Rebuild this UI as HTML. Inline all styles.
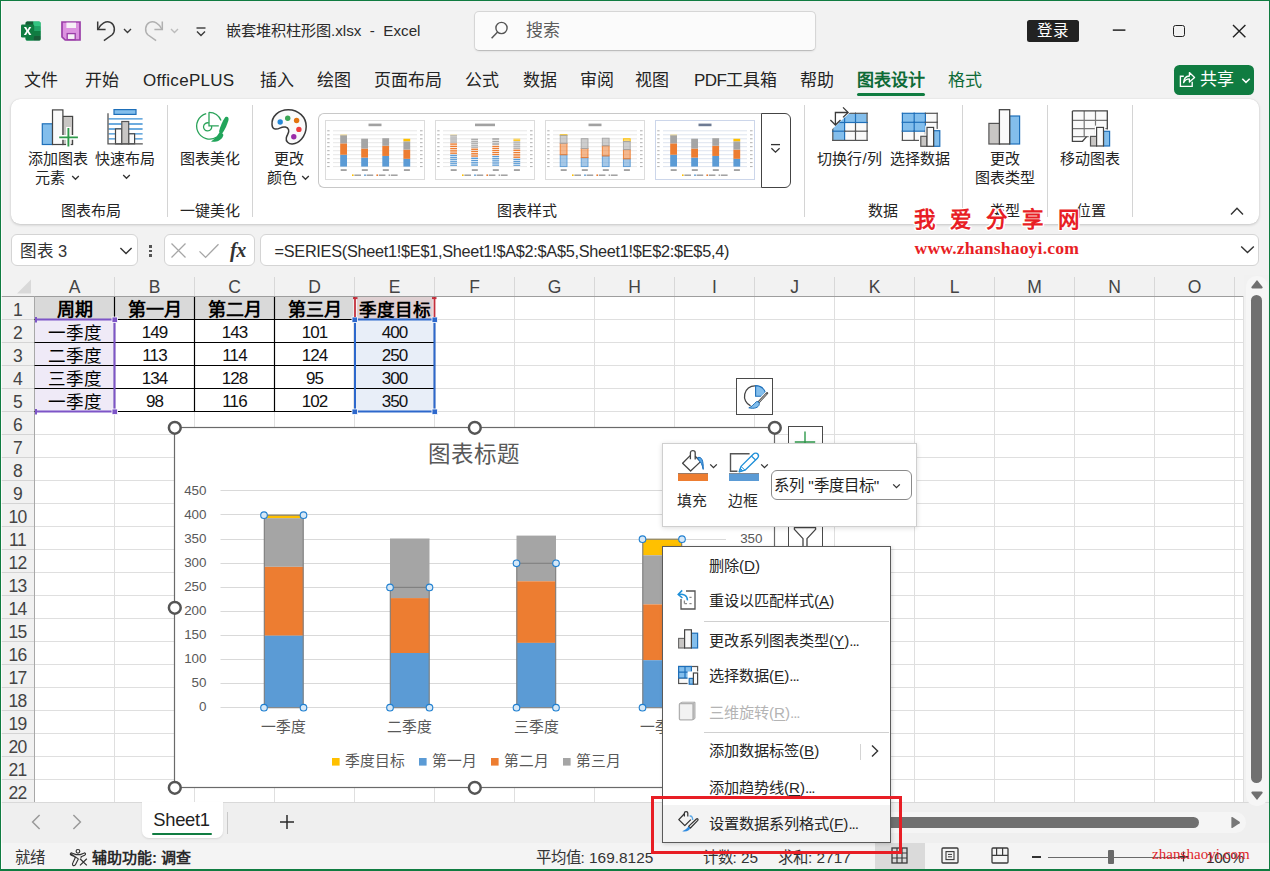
<!DOCTYPE html>
<html lang="zh-CN"><head><meta charset="utf-8"><title>Excel</title>
<style>
html,body{margin:0;padding:0}
body{width:1270px;height:871px;position:relative;overflow:hidden;background:#f2f2f2;font-family:"Liberation Sans",sans-serif;}
.b{position:absolute;box-sizing:border-box;display:block}
.t{position:absolute;white-space:nowrap;margin:0;padding:0}
u{text-decoration:underline;text-underline-offset:2px}
</style></head><body>
<svg class="b" style="left:21px;top:21px;" width="20" height="20" viewBox="0 0 20 20">
<rect x="4.6" y="0.4" width="15" height="19.2" rx="1.6" fill="#21a366"/>
<path d="M4.6 2 A1.6 1.6 0 0 1 6.2 0.4 H12.4 V10 H4.6 Z" fill="#185c37"/>
<path d="M12.4 0.4 H18 A1.6 1.6 0 0 1 19.6 2 V5.3 H12.4 Z" fill="#33c481"/>
<rect x="12.4" y="5.3" width="7.2" height="4.8" fill="#21a366"/>
<rect x="12.4" y="10" width="7.2" height="4.8" fill="#107c41"/>
<path d="M4.6 10 H12.4 V19.6 H6.2 A1.6 1.6 0 0 1 4.6 18 Z" fill="#107c41"/>
<path d="M12.4 14.8 H19.6 V18 A1.6 1.6 0 0 1 18 19.6 H12.4 Z" fill="#185c37"/>
<rect x="0" y="3.4" width="13.2" height="13.2" rx="1.3" fill="#107c41"/>
<path d="M2.9 6 L5.2 6 L6.6 8.7 L8.1 6 L10.3 6 L7.8 10 L10.4 14 L8.1 14 L6.6 11.2 L5.1 14 L2.8 14 L5.4 10 Z" fill="#fff"/>
</svg>
<svg class="b" style="left:61px;top:21px;" width="20" height="20" viewBox="0 0 20 20">
<path d="M1 1 H19 V19 H4.2 L1 15.8 Z" fill="#dc92e0" stroke="#9b3fa8" stroke-width="1.7" stroke-linejoin="miter"/>
<rect x="5.4" y="1.6" width="9.6" height="5.4" fill="#f6f0f6"/>
<rect x="6.2" y="12.6" width="8" height="6" fill="#f6f0f6" stroke="#9b3fa8" stroke-width="1.3"/>
</svg>
<svg class="b" style="left:96px;top:20px;" width="22" height="22" viewBox="0 0 22 22">
<path d="M1.7 1.6 V9.5 H9.6" fill="none" stroke="#3a3a3a" stroke-width="1.5"/>
<path d="M2.3 9 C5 3.6 10 0.4 14.4 2.4 C19 4.8 19.6 11 16.2 14.8 L7.9 20.7" fill="none" stroke="#3a3a3a" stroke-width="1.5"/>
</svg>
<svg class="b" style="left:123px;top:27px;" width="9" height="8" viewBox="0 0 9 8"><path d="M1 2 L4.5 5.5 L8 2" fill="none" stroke="#3a3a3a" stroke-width="1.4"/></svg>
<svg class="b" style="left:141.7px;top:20px;" width="22" height="22" viewBox="0 0 22 22">
<path d="M20.3 1.6 V9.5 H12.4" fill="none" stroke="#b0b0b0" stroke-width="1.5"/>
<path d="M19.7 9 C17 3.6 12 0.4 7.6 2.4 C3 4.8 2.4 11 5.8 14.8 L14.1 20.7" fill="none" stroke="#b0b0b0" stroke-width="1.5"/>
</svg>
<svg class="b" style="left:170px;top:27px;" width="9" height="8" viewBox="0 0 9 8"><path d="M1 2 L4.5 5.5 L8 2" fill="none" stroke="#bcbcbc" stroke-width="1.4"/></svg>
<svg class="b" style="left:195px;top:26px;" width="12" height="12" viewBox="0 0 12 12"><path d="M1.5 2 H10.5" stroke="#3a3a3a" stroke-width="1.4"/><path d="M2 5.5 L6 9.5 L10 5.5" fill="none" stroke="#3a3a3a" stroke-width="1.4"/></svg>
<div class="t " style="left:226px;top:21.0px;font-size:15.2px;line-height:20px;color:#2b2b2b;">嵌套堆积柱形图.xlsx&nbsp; -&nbsp; Excel</div>
<div class="b" style="left:474px;top:11px;width:342px;height:40px;background:#fbfbfb;border:1px solid #d6d6d6;border-bottom-color:#bdbdbd;border-radius:5px;box-shadow:0 1px 2px rgba(0,0,0,.06)"></div>
<svg class="b" style="left:490px;top:20px;" width="20" height="20" viewBox="0 0 20 20"><circle cx="11.5" cy="8" r="5.6" fill="none" stroke="#555" stroke-width="1.4"/><path d="M7.6 12 L1.6 18.2" stroke="#555" stroke-width="1.5"/></svg>
<div class="t " style="left:526px;top:21.0px;font-size:17px;line-height:20px;color:#5c5c5c;">搜索</div>
<div class="b" style="left:1027px;top:19.5px;width:52px;height:22.5px;background:#222;border-radius:2.5px"></div>
<div class="t " style="left:1053px;transform:translateX(-50%);top:21.0px;font-size:15.5px;line-height:20px;color:#fff;font-weight:300;">登录</div>
<svg class="b" style="left:1112px;top:26px;" width="16" height="8" viewBox="0 0 16 8"><path d="M0.8 4.1 H13.4" stroke="#222" stroke-width="1.5"/></svg>
<div class="b" style="left:1172.6px;top:24.6px;width:12.6px;height:12.6px;border:1.4px solid #222;border-radius:2.5px"></div>
<svg class="b" style="left:1231px;top:23px;" width="16" height="16" viewBox="0 0 16 16"><path d="M2 1.9 L14.4 14.3 M14.4 1.9 L2 14.3" stroke="#222" stroke-width="1.4"/></svg>
<div class="t " style="left:23.5px;top:71.3px;font-size:17px;line-height:20px;color:#242424;">文件</div>
<div class="t " style="left:84.5px;top:71.3px;font-size:17px;line-height:20px;color:#242424;">开始</div>
<div class="t " style="left:143px;top:71.3px;font-size:17px;line-height:20px;color:#242424;"><span style="letter-spacing:0.3px">OfficePLUS</span></div>
<div class="t " style="left:259.5px;top:71.3px;font-size:17px;line-height:20px;color:#242424;">插入</div>
<div class="t " style="left:316.5px;top:71.3px;font-size:17px;line-height:20px;color:#242424;">绘图</div>
<div class="t " style="left:374px;top:71.3px;font-size:17px;line-height:20px;color:#242424;">页面布局</div>
<div class="t " style="left:465px;top:71.3px;font-size:17px;line-height:20px;color:#242424;">公式</div>
<div class="t " style="left:522.5px;top:71.3px;font-size:17px;line-height:20px;color:#242424;">数据</div>
<div class="t " style="left:579.5px;top:71.3px;font-size:17px;line-height:20px;color:#242424;">审阅</div>
<div class="t " style="left:635px;top:71.3px;font-size:17px;line-height:20px;color:#242424;">视图</div>
<div class="t " style="left:694px;top:71.3px;font-size:17px;line-height:20px;color:#242424;"><span style="letter-spacing:-0.6px">PDF</span>工具箱</div>
<div class="t " style="left:800px;top:71.3px;font-size:17px;line-height:20px;color:#242424;">帮助</div>
<div class="t " style="left:856.7px;top:71.2px;font-size:17px;line-height:20px;color:#0e6b37;font-weight:700;">图表设计</div>
<div class="b" style="left:857px;top:93px;width:68px;height:3px;background:#107c41;border-radius:1.5px"></div>
<div class="t " style="left:947.5px;top:71.2px;font-size:17px;line-height:20px;color:#0e6b37;">格式</div>
<div class="b" style="left:1174px;top:64.5px;width:80px;height:30.5px;background:#107c41;border-radius:5.5px"></div>
<svg class="b" style="left:1178px;top:69px;" width="20" height="20" viewBox="0 0 20 20"><path d="M5.8 7.2 H2.4 V17.4 H14.2 V12.8" fill="none" stroke="#fff" stroke-width="1.35"/><path d="M5.6 13.6 C5.8 9.4 8.2 7.2 11.4 7 V3.6 L16.6 8.4 L11.4 13 V9.8 C8.8 9.8 7 10.8 5.6 13.6 Z" fill="none" stroke="#fff" stroke-width="1.3" stroke-linejoin="round"/></svg>
<div class="t " style="left:1200px;top:70.3px;font-size:17px;line-height:20px;color:#fff;font-weight:500;">共享</div>
<svg class="b" style="left:1240.5px;top:76.5px;" width="10" height="8" viewBox="0 0 10 8"><path d="M1.3 1.8 L5 5.4 L8.7 1.8" fill="none" stroke="#fff" stroke-width="1.5"/></svg>
<div class="b" style="left:11px;top:99px;width:1248px;height:124.5px;background:#fff;border-radius:9px;box-shadow:0 1px 3px rgba(0,0,0,.18),0 0 1px rgba(0,0,0,.12)"></div>
<div class="b" style="left:167px;top:105px;width:1px;height:112px;background:#d4d4d4"></div>
<div class="b" style="left:252px;top:105px;width:1px;height:112px;background:#d4d4d4"></div>
<div class="b" style="left:804px;top:105px;width:1px;height:112px;background:#d4d4d4"></div>
<div class="b" style="left:962px;top:105px;width:1px;height:112px;background:#d4d4d4"></div>
<div class="b" style="left:1047px;top:105px;width:1px;height:112px;background:#d4d4d4"></div>
<div class="b" style="left:1132px;top:105px;width:1px;height:112px;background:#d4d4d4"></div>
<svg class="b" style="left:38px;top:106px;" width="44" height="44" viewBox="0 0 44 44">
<rect x="4.3" y="17.8" width="10.2" height="20.7" fill="#83beec" stroke="#1e6fb9" stroke-width="1.2"/>
<rect x="24.6" y="10.4" width="10" height="28.1" fill="#c8c6c4" stroke="#444" stroke-width="1.2"/>
<rect x="14.5" y="3.9" width="10.4" height="34.6" fill="#fafafa" stroke="#444" stroke-width="1.2"/>
<path d="M30.4 21 V41.5 M20.5 31.4 H40.6" stroke="#fff" stroke-width="4.6"/>
<path d="M30.4 22 V40.6 M21.2 31.4 H39.9" stroke="#2e9a4b" stroke-width="1.9"/>
</svg>
<div class="t " style="left:58px;transform:translateX(-50%);top:149.0px;font-size:15px;line-height:20px;color:#242424;">添加图表</div>
<div class="t " style="left:50.3px;transform:translateX(-50%);top:168.0px;font-size:15px;line-height:20px;color:#242424;">元素</div>
<svg class="b" style="left:71px;top:174px;" width="9" height="8" viewBox="0 0 9 8"><path d="M1.2 2 L4.5 5.3 L7.8 2" fill="none" stroke="#333" stroke-width="1.3"/></svg>
<svg class="b" style="left:104px;top:106px;" width="44" height="44" viewBox="0 0 44 44">
<rect x="10" y="3.6" width="22" height="4.8" fill="#83beec" stroke="#1e6fb9" stroke-width="1.2"/>
<path d="M4.5 12.9 H38.6" stroke="#3b8fd4" stroke-width="1.3"/><path d="M4.5 18 H38.6" stroke="#3b8fd4" stroke-width="1.3"/><path d="M4.5 23 H38.6" stroke="#3b8fd4" stroke-width="1.3"/><path d="M4.5 27.8 H38.6" stroke="#3b8fd4" stroke-width="1.3"/><path d="M4.5 32.9 H38.6" stroke="#3b8fd4" stroke-width="1.3"/>
<rect x="11.5" y="22.9" width="6.3" height="15" fill="#fafafa" stroke="#444" stroke-width="1.2"/>
<rect x="24.6" y="27.8" width="6" height="10" fill="#fafafa" stroke="#444" stroke-width="1.2"/>
<rect x="17.8" y="15.5" width="6.9" height="22.4" fill="#c8c6c4" stroke="#555" stroke-width="1.2"/>
<path d="M4 7.3 V37.9 H38.8" fill="none" stroke="#555" stroke-width="1.3"/>
</svg>
<div class="t " style="left:125px;transform:translateX(-50%);top:149.0px;font-size:15px;line-height:20px;color:#242424;">快速布局</div>
<svg class="b" style="left:122px;top:173px;" width="9" height="8" viewBox="0 0 9 8"><path d="M1.2 2 L4.5 5.3 L7.8 2" fill="none" stroke="#333" stroke-width="1.3"/></svg>
<div class="t " style="left:91px;transform:translateX(-50%);top:200.5px;font-size:15px;line-height:20px;color:#242424;">图表布局</div>
<svg class="b" style="left:190px;top:106px;" width="44" height="44" viewBox="0 0 44 44">
<path d="M26.8 31 A13 13 0 1 1 16.2 7.6" fill="none" stroke="#2ba35a" stroke-width="1.3"/>
<path d="M19 6.3 V19.8 H28.8" fill="none" stroke="#2ba35a" stroke-width="1.3"/>
<path d="M19 6.4 A13.2 13.2 0 0 1 31 14.5" fill="none" stroke="#2ba35a" stroke-width="1.3"/>
<path d="M19 17 A4.1 4.1 0 1 0 21.6 19.9" fill="none" stroke="#2ba35a" stroke-width="1.3"/>
<path d="M35.2 11.3 C37.6 9.9 39.2 12 38.4 14.6 C37 19 35.2 23.2 32.9 26.6 C31.4 28.6 28.6 27.2 29.2 24.8 C30.4 20.2 32.4 15.2 35.2 11.3 Z" fill="#22a55b"/>
<path d="M29.4 26.6 C31.3 26.4 33.2 27.6 33.4 29 C32.6 32.5 29.6 35 26.4 35.4 C24.5 35.8 22.6 35.9 21 35.5 C24.3 33.6 27 30.6 29.4 26.6 Z" fill="#22a55b"/>
</svg>
<div class="t " style="left:209.5px;transform:translateX(-50%);top:149.0px;font-size:15px;line-height:20px;color:#242424;">图表美化</div>
<div class="t " style="left:209.5px;transform:translateX(-50%);top:200.5px;font-size:15px;line-height:20px;color:#242424;">一键美化</div>
<svg class="b" style="left:270px;top:108px;" width="38" height="38" viewBox="0 0 38 38">
<path d="M2 16.6 C1.4 8.6 8.5 1.6 18.4 1.7 C28.6 1.8 36.3 9 36.2 18.6 C36.1 28.8 28.6 35.6 22.4 36 C18.4 36.2 15.6 33.2 16.3 29.8 C16.9 26.8 19.6 24.8 18.6 21.8 C17.6 18.8 13.6 18.2 10.4 19.8 C7.2 21.4 2.5 22.6 2 16.6 Z" fill="#fafafa" stroke="#3a3a3a" stroke-width="1.5"/>
<circle cx="10.2" cy="14" r="2.7" fill="#2488d8"/><circle cx="17.7" cy="10.2" r="2.7" fill="#3aa655"/>
<circle cx="26.6" cy="12.5" r="2.7" fill="#e3730e"/><circle cx="28.9" cy="21.4" r="2.7" fill="#ee3c40"/>
<circle cx="23.8" cy="28.8" r="2.7" fill="#9a2da8"/>
</svg>
<div class="t " style="left:289px;transform:translateX(-50%);top:149.0px;font-size:15px;line-height:20px;color:#242424;">更改</div>
<div class="t " style="left:281.5px;transform:translateX(-50%);top:168.0px;font-size:15px;line-height:20px;color:#242424;">颜色</div>
<svg class="b" style="left:301px;top:174px;" width="9" height="8" viewBox="0 0 9 8"><path d="M1.2 2 L4.5 5.3 L7.8 2" fill="none" stroke="#333" stroke-width="1.3"/></svg>
<div class="b" style="left:318px;top:113px;width:444px;height:75px;border:1px solid #c8c8c8;border-right:none;border-radius:6px 0 0 6px;background:#fff"></div>
<div class="b" style="left:760.7px;top:113px;width:30.8px;height:75px;border:1.3px solid #444;border-radius:0 6px 6px 0;background:#fff"></div>
<svg class="b" style="left:769px;top:142px;" width="13" height="13" viewBox="0 0 13 13"><path d="M2 2.6 H11" stroke="#333" stroke-width="1.3"/><path d="M2.4 6.2 L6.5 10.2 L10.6 6.2" fill="none" stroke="#333" stroke-width="1.3"/></svg>
<div class="t " style="left:527px;transform:translateX(-50%);top:200.5px;font-size:15px;line-height:20px;color:#242424;">图表样式</div>
<svg class="b" style="left:325px;top:120px;" width="100" height="60" viewBox="0 0 100 60"><rect x="0.5" y="0.5" width="99" height="59" fill="#fff" stroke="#dcdcdc"/><path d="M8 10.8 H92" stroke="#dedede" stroke-width="0.7"/><path d="M2.2 10.8 H4.6 M95 10.8 H97.6" stroke="#9a9a9a" stroke-width="0.8"/><path d="M8 14.8 H92" stroke="#dedede" stroke-width="0.7"/><path d="M2.2 14.8 H4.6 M95 14.8 H97.6" stroke="#9a9a9a" stroke-width="0.8"/><path d="M8 18.8 H92" stroke="#dedede" stroke-width="0.7"/><path d="M2.2 18.8 H4.6 M95 18.8 H97.6" stroke="#9a9a9a" stroke-width="0.8"/><path d="M8 22.7 H92" stroke="#dedede" stroke-width="0.7"/><path d="M2.2 22.7 H4.6 M95 22.7 H97.6" stroke="#9a9a9a" stroke-width="0.8"/><path d="M8 26.7 H92" stroke="#dedede" stroke-width="0.7"/><path d="M2.2 26.7 H4.6 M95 26.7 H97.6" stroke="#9a9a9a" stroke-width="0.8"/><path d="M8 30.7 H92" stroke="#dedede" stroke-width="0.7"/><path d="M2.2 30.7 H4.6 M95 30.7 H97.6" stroke="#9a9a9a" stroke-width="0.8"/><path d="M8 34.7 H92" stroke="#dedede" stroke-width="0.7"/><path d="M2.2 34.7 H4.6 M95 34.7 H97.6" stroke="#9a9a9a" stroke-width="0.8"/><path d="M8 38.7 H92" stroke="#dedede" stroke-width="0.7"/><path d="M2.2 38.7 H4.6 M95 38.7 H97.6" stroke="#9a9a9a" stroke-width="0.8"/><path d="M8 42.6 H92" stroke="#dedede" stroke-width="0.7"/><path d="M2.2 42.6 H4.6 M95 42.6 H97.6" stroke="#9a9a9a" stroke-width="0.8"/><path d="M8 46.6 H92" stroke="#dedede" stroke-width="0.7"/><path d="M2.2 46.6 H4.6 M95 46.6 H97.6" stroke="#9a9a9a" stroke-width="0.8"/><rect x="15.2" y="14.78" width="6.8" height="0.56" fill="#ffc000"/><rect x="15.2" y="34.75" width="6.8" height="11.85" fill="#5b9bd5"/><rect x="15.2" y="23.37" width="6.8" height="11.38" fill="#ed7d31"/><rect x="15.2" y="15.33" width="6.8" height="8.04" fill="#a5a5a5"/><rect x="15.7" y="49.3" width="6" height="1.5" fill="#8c8c8c"/><rect x="36.2" y="37.61" width="6.8" height="8.99" fill="#5b9bd5"/><rect x="36.2" y="28.54" width="6.8" height="9.07" fill="#ed7d31"/><rect x="36.2" y="18.68" width="6.8" height="9.86" fill="#a5a5a5"/><rect x="36.8" y="49.3" width="6" height="1.5" fill="#8c8c8c"/><rect x="57.3" y="35.94" width="6.8" height="10.66" fill="#5b9bd5"/><rect x="57.3" y="25.76" width="6.8" height="10.18" fill="#ed7d31"/><rect x="57.3" y="18.20" width="6.8" height="7.56" fill="#a5a5a5"/><rect x="57.8" y="49.3" width="6" height="1.5" fill="#8c8c8c"/><rect x="78.4" y="18.76" width="6.8" height="2.70" fill="#ffc000"/><rect x="78.4" y="38.80" width="6.8" height="7.80" fill="#5b9bd5"/><rect x="78.4" y="29.58" width="6.8" height="9.23" fill="#ed7d31"/><rect x="78.4" y="21.46" width="6.8" height="8.11" fill="#a5a5a5"/><rect x="78.9" y="49.3" width="6" height="1.5" fill="#8c8c8c"/><rect x="43.5" y="3.6" width="13" height="2.6" fill="#8a8a8a" opacity="0.8"/><rect x="27.0" y="54.4" width="1.6" height="1.6" fill="#ffc000"/><rect x="29.4" y="54.5" width="6.6" height="1.4" fill="#9a9a9a"/><rect x="39.2" y="54.4" width="1.6" height="1.6" fill="#5b9bd5"/><rect x="41.6" y="54.5" width="6.6" height="1.4" fill="#9a9a9a"/><rect x="51.4" y="54.4" width="1.6" height="1.6" fill="#ed7d31"/><rect x="53.8" y="54.5" width="6.6" height="1.4" fill="#9a9a9a"/><rect x="63.599999999999994" y="54.4" width="1.6" height="1.6" fill="#a5a5a5"/><rect x="66.0" y="54.5" width="6.6" height="1.4" fill="#9a9a9a"/></svg>
<svg class="b" style="left:435px;top:120px;" width="100" height="60" viewBox="0 0 100 60"><rect x="0.5" y="0.5" width="99" height="59" fill="#fff" stroke="#dcdcdc"/><path d="M8 10.8 H92" stroke="#dedede" stroke-width="0.7"/><path d="M2.2 10.8 H4.6 M95 10.8 H97.6" stroke="#9a9a9a" stroke-width="0.8"/><path d="M8 14.8 H92" stroke="#dedede" stroke-width="0.7"/><path d="M2.2 14.8 H4.6 M95 14.8 H97.6" stroke="#9a9a9a" stroke-width="0.8"/><path d="M8 18.8 H92" stroke="#dedede" stroke-width="0.7"/><path d="M2.2 18.8 H4.6 M95 18.8 H97.6" stroke="#9a9a9a" stroke-width="0.8"/><path d="M8 22.7 H92" stroke="#dedede" stroke-width="0.7"/><path d="M2.2 22.7 H4.6 M95 22.7 H97.6" stroke="#9a9a9a" stroke-width="0.8"/><path d="M8 26.7 H92" stroke="#dedede" stroke-width="0.7"/><path d="M2.2 26.7 H4.6 M95 26.7 H97.6" stroke="#9a9a9a" stroke-width="0.8"/><path d="M8 30.7 H92" stroke="#dedede" stroke-width="0.7"/><path d="M2.2 30.7 H4.6 M95 30.7 H97.6" stroke="#9a9a9a" stroke-width="0.8"/><path d="M8 34.7 H92" stroke="#dedede" stroke-width="0.7"/><path d="M2.2 34.7 H4.6 M95 34.7 H97.6" stroke="#9a9a9a" stroke-width="0.8"/><path d="M8 38.7 H92" stroke="#dedede" stroke-width="0.7"/><path d="M2.2 38.7 H4.6 M95 38.7 H97.6" stroke="#9a9a9a" stroke-width="0.8"/><path d="M8 42.6 H92" stroke="#dedede" stroke-width="0.7"/><path d="M2.2 42.6 H4.6 M95 42.6 H97.6" stroke="#9a9a9a" stroke-width="0.8"/><path d="M8 46.6 H92" stroke="#dedede" stroke-width="0.7"/><path d="M2.2 46.6 H4.6 M95 46.6 H97.6" stroke="#9a9a9a" stroke-width="0.8"/><rect x="15.2" y="14.78" width="6.8" height="0.17" fill="#ffc000"/><rect x="15.2" y="15.06" width="6.8" height="0.17" fill="#ffc000"/><rect x="15.2" y="34.75" width="6.8" height="1.22" fill="#5b9bd5"/><rect x="15.2" y="36.72" width="6.8" height="1.22" fill="#5b9bd5"/><rect x="15.2" y="38.70" width="6.8" height="1.22" fill="#5b9bd5"/><rect x="15.2" y="40.67" width="6.8" height="1.22" fill="#5b9bd5"/><rect x="15.2" y="42.65" width="6.8" height="1.22" fill="#5b9bd5"/><rect x="15.2" y="44.62" width="6.8" height="1.22" fill="#5b9bd5"/><rect x="15.2" y="23.37" width="6.8" height="1.41" fill="#ed7d31"/><rect x="15.2" y="25.65" width="6.8" height="1.41" fill="#ed7d31"/><rect x="15.2" y="27.92" width="6.8" height="1.41" fill="#ed7d31"/><rect x="15.2" y="30.20" width="6.8" height="1.41" fill="#ed7d31"/><rect x="15.2" y="32.47" width="6.8" height="1.41" fill="#ed7d31"/><rect x="15.2" y="15.33" width="6.8" height="1.25" fill="#a5a5a5"/><rect x="15.2" y="17.34" width="6.8" height="1.25" fill="#a5a5a5"/><rect x="15.2" y="19.35" width="6.8" height="1.25" fill="#a5a5a5"/><rect x="15.2" y="21.36" width="6.8" height="1.25" fill="#a5a5a5"/><rect x="15.7" y="49.3" width="6" height="1.5" fill="#8c8c8c"/><rect x="36.2" y="37.61" width="6.8" height="1.39" fill="#5b9bd5"/><rect x="36.2" y="39.86" width="6.8" height="1.39" fill="#5b9bd5"/><rect x="36.2" y="42.11" width="6.8" height="1.39" fill="#5b9bd5"/><rect x="36.2" y="44.35" width="6.8" height="1.39" fill="#5b9bd5"/><rect x="36.2" y="28.54" width="6.8" height="1.41" fill="#ed7d31"/><rect x="36.2" y="30.81" width="6.8" height="1.41" fill="#ed7d31"/><rect x="36.2" y="33.08" width="6.8" height="1.41" fill="#ed7d31"/><rect x="36.2" y="35.34" width="6.8" height="1.41" fill="#ed7d31"/><rect x="36.2" y="18.68" width="6.8" height="1.22" fill="#a5a5a5"/><rect x="36.2" y="20.65" width="6.8" height="1.22" fill="#a5a5a5"/><rect x="36.2" y="22.62" width="6.8" height="1.22" fill="#a5a5a5"/><rect x="36.2" y="24.59" width="6.8" height="1.22" fill="#a5a5a5"/><rect x="36.2" y="26.57" width="6.8" height="1.22" fill="#a5a5a5"/><rect x="36.8" y="49.3" width="6" height="1.5" fill="#8c8c8c"/><rect x="57.3" y="35.94" width="6.8" height="1.32" fill="#5b9bd5"/><rect x="57.3" y="38.07" width="6.8" height="1.32" fill="#5b9bd5"/><rect x="57.3" y="40.20" width="6.8" height="1.32" fill="#5b9bd5"/><rect x="57.3" y="42.34" width="6.8" height="1.32" fill="#5b9bd5"/><rect x="57.3" y="44.47" width="6.8" height="1.32" fill="#5b9bd5"/><rect x="57.3" y="25.76" width="6.8" height="1.26" fill="#ed7d31"/><rect x="57.3" y="27.79" width="6.8" height="1.26" fill="#ed7d31"/><rect x="57.3" y="29.83" width="6.8" height="1.26" fill="#ed7d31"/><rect x="57.3" y="31.87" width="6.8" height="1.26" fill="#ed7d31"/><rect x="57.3" y="33.90" width="6.8" height="1.26" fill="#ed7d31"/><rect x="57.3" y="18.20" width="6.8" height="1.56" fill="#a5a5a5"/><rect x="57.3" y="20.72" width="6.8" height="1.56" fill="#a5a5a5"/><rect x="57.3" y="23.24" width="6.8" height="1.56" fill="#a5a5a5"/><rect x="57.8" y="49.3" width="6" height="1.5" fill="#8c8c8c"/><rect x="78.4" y="18.76" width="6.8" height="0.84" fill="#ffc000"/><rect x="78.4" y="20.11" width="6.8" height="0.84" fill="#ffc000"/><rect x="78.4" y="38.80" width="6.8" height="1.21" fill="#5b9bd5"/><rect x="78.4" y="40.75" width="6.8" height="1.21" fill="#5b9bd5"/><rect x="78.4" y="42.70" width="6.8" height="1.21" fill="#5b9bd5"/><rect x="78.4" y="44.65" width="6.8" height="1.21" fill="#5b9bd5"/><rect x="78.4" y="29.58" width="6.8" height="1.43" fill="#ed7d31"/><rect x="78.4" y="31.88" width="6.8" height="1.43" fill="#ed7d31"/><rect x="78.4" y="34.19" width="6.8" height="1.43" fill="#ed7d31"/><rect x="78.4" y="36.50" width="6.8" height="1.43" fill="#ed7d31"/><rect x="78.4" y="21.46" width="6.8" height="1.26" fill="#a5a5a5"/><rect x="78.4" y="23.49" width="6.8" height="1.26" fill="#a5a5a5"/><rect x="78.4" y="25.52" width="6.8" height="1.26" fill="#a5a5a5"/><rect x="78.4" y="27.55" width="6.8" height="1.26" fill="#a5a5a5"/><rect x="78.9" y="49.3" width="6" height="1.5" fill="#8c8c8c"/><rect x="40.0" y="3.6" width="20" height="2.6" fill="#8a8a8a" opacity="0.8"/><rect x="27.0" y="54.4" width="1.6" height="1.6" fill="#ffc000"/><rect x="29.4" y="54.5" width="6.6" height="1.4" fill="#9a9a9a"/><rect x="39.2" y="54.4" width="1.6" height="1.6" fill="#5b9bd5"/><rect x="41.6" y="54.5" width="6.6" height="1.4" fill="#9a9a9a"/><rect x="51.4" y="54.4" width="1.6" height="1.6" fill="#ed7d31"/><rect x="53.8" y="54.5" width="6.6" height="1.4" fill="#9a9a9a"/><rect x="63.599999999999994" y="54.4" width="1.6" height="1.6" fill="#a5a5a5"/><rect x="66.0" y="54.5" width="6.6" height="1.4" fill="#9a9a9a"/></svg>
<svg class="b" style="left:545px;top:120px;" width="100" height="60" viewBox="0 0 100 60"><rect x="0.5" y="0.5" width="99" height="59" fill="#fff" stroke="#dcdcdc"/><path d="M8 10.8 H92" stroke="#dedede" stroke-width="0.7"/><path d="M2.2 10.8 H4.6 M95 10.8 H97.6" stroke="#9a9a9a" stroke-width="0.8"/><path d="M8 14.8 H92" stroke="#dedede" stroke-width="0.7"/><path d="M2.2 14.8 H4.6 M95 14.8 H97.6" stroke="#9a9a9a" stroke-width="0.8"/><path d="M8 18.8 H92" stroke="#dedede" stroke-width="0.7"/><path d="M2.2 18.8 H4.6 M95 18.8 H97.6" stroke="#9a9a9a" stroke-width="0.8"/><path d="M8 22.7 H92" stroke="#dedede" stroke-width="0.7"/><path d="M2.2 22.7 H4.6 M95 22.7 H97.6" stroke="#9a9a9a" stroke-width="0.8"/><path d="M8 26.7 H92" stroke="#dedede" stroke-width="0.7"/><path d="M2.2 26.7 H4.6 M95 26.7 H97.6" stroke="#9a9a9a" stroke-width="0.8"/><path d="M8 30.7 H92" stroke="#dedede" stroke-width="0.7"/><path d="M2.2 30.7 H4.6 M95 30.7 H97.6" stroke="#9a9a9a" stroke-width="0.8"/><path d="M8 34.7 H92" stroke="#dedede" stroke-width="0.7"/><path d="M2.2 34.7 H4.6 M95 34.7 H97.6" stroke="#9a9a9a" stroke-width="0.8"/><path d="M8 38.7 H92" stroke="#dedede" stroke-width="0.7"/><path d="M2.2 38.7 H4.6 M95 38.7 H97.6" stroke="#9a9a9a" stroke-width="0.8"/><path d="M8 42.6 H92" stroke="#dedede" stroke-width="0.7"/><path d="M2.2 42.6 H4.6 M95 42.6 H97.6" stroke="#9a9a9a" stroke-width="0.8"/><path d="M8 46.6 H92" stroke="#dedede" stroke-width="0.7"/><path d="M2.2 46.6 H4.6 M95 46.6 H97.6" stroke="#9a9a9a" stroke-width="0.8"/><rect x="15.2" y="14.78" width="6.8" height="0.56" fill="#ffc000" fill-opacity="0.55" stroke="#ffc000" stroke-width="0.9"/><rect x="15.2" y="34.75" width="6.8" height="11.85" fill="#5b9bd5" fill-opacity="0.55" stroke="#5b9bd5" stroke-width="0.9"/><rect x="15.2" y="23.37" width="6.8" height="11.38" fill="#ed7d31" fill-opacity="0.55" stroke="#ed7d31" stroke-width="0.9"/><rect x="15.2" y="15.33" width="6.8" height="8.04" fill="#a5a5a5" fill-opacity="0.55" stroke="#a5a5a5" stroke-width="0.9"/><rect x="15.7" y="49.3" width="6" height="1.5" fill="#8c8c8c"/><rect x="36.2" y="37.61" width="6.8" height="8.99" fill="#5b9bd5" fill-opacity="0.55" stroke="#5b9bd5" stroke-width="0.9"/><rect x="36.2" y="28.54" width="6.8" height="9.07" fill="#ed7d31" fill-opacity="0.55" stroke="#ed7d31" stroke-width="0.9"/><rect x="36.2" y="18.68" width="6.8" height="9.86" fill="#a5a5a5" fill-opacity="0.55" stroke="#a5a5a5" stroke-width="0.9"/><rect x="36.8" y="49.3" width="6" height="1.5" fill="#8c8c8c"/><rect x="57.3" y="35.94" width="6.8" height="10.66" fill="#5b9bd5" fill-opacity="0.55" stroke="#5b9bd5" stroke-width="0.9"/><rect x="57.3" y="25.76" width="6.8" height="10.18" fill="#ed7d31" fill-opacity="0.55" stroke="#ed7d31" stroke-width="0.9"/><rect x="57.3" y="18.20" width="6.8" height="7.56" fill="#a5a5a5" fill-opacity="0.55" stroke="#a5a5a5" stroke-width="0.9"/><rect x="57.8" y="49.3" width="6" height="1.5" fill="#8c8c8c"/><rect x="78.4" y="18.76" width="6.8" height="2.70" fill="#ffc000" fill-opacity="0.55" stroke="#ffc000" stroke-width="0.9"/><rect x="78.4" y="38.80" width="6.8" height="7.80" fill="#5b9bd5" fill-opacity="0.55" stroke="#5b9bd5" stroke-width="0.9"/><rect x="78.4" y="29.58" width="6.8" height="9.23" fill="#ed7d31" fill-opacity="0.55" stroke="#ed7d31" stroke-width="0.9"/><rect x="78.4" y="21.46" width="6.8" height="8.11" fill="#a5a5a5" fill-opacity="0.55" stroke="#a5a5a5" stroke-width="0.9"/><rect x="78.9" y="49.3" width="6" height="1.5" fill="#8c8c8c"/><rect x="43.5" y="3.6" width="13" height="2.6" fill="#8a8a8a" opacity="0.8"/><rect x="27.0" y="54.4" width="1.6" height="1.6" fill="#ffc000"/><rect x="29.4" y="54.5" width="6.6" height="1.4" fill="#9a9a9a"/><rect x="39.2" y="54.4" width="1.6" height="1.6" fill="#5b9bd5"/><rect x="41.6" y="54.5" width="6.6" height="1.4" fill="#9a9a9a"/><rect x="51.4" y="54.4" width="1.6" height="1.6" fill="#ed7d31"/><rect x="53.8" y="54.5" width="6.6" height="1.4" fill="#9a9a9a"/><rect x="63.599999999999994" y="54.4" width="1.6" height="1.6" fill="#a5a5a5"/><rect x="66.0" y="54.5" width="6.6" height="1.4" fill="#9a9a9a"/></svg>
<svg class="b" style="left:655px;top:120px;" width="100" height="60" viewBox="0 0 100 60"><rect x="0.5" y="0.5" width="99" height="59" fill="#fff" stroke="#ccd6ea"/><path d="M8 10.8 H92" stroke="#cfd8e8" stroke-width="0.7"/><path d="M2.2 10.8 H4.6 M95 10.8 H97.6" stroke="#9a9a9a" stroke-width="0.8"/><path d="M8 14.8 H92" stroke="#cfd8e8" stroke-width="0.7"/><path d="M2.2 14.8 H4.6 M95 14.8 H97.6" stroke="#9a9a9a" stroke-width="0.8"/><path d="M8 18.8 H92" stroke="#cfd8e8" stroke-width="0.7"/><path d="M2.2 18.8 H4.6 M95 18.8 H97.6" stroke="#9a9a9a" stroke-width="0.8"/><path d="M8 22.7 H92" stroke="#cfd8e8" stroke-width="0.7"/><path d="M2.2 22.7 H4.6 M95 22.7 H97.6" stroke="#9a9a9a" stroke-width="0.8"/><path d="M8 26.7 H92" stroke="#cfd8e8" stroke-width="0.7"/><path d="M2.2 26.7 H4.6 M95 26.7 H97.6" stroke="#9a9a9a" stroke-width="0.8"/><path d="M8 30.7 H92" stroke="#cfd8e8" stroke-width="0.7"/><path d="M2.2 30.7 H4.6 M95 30.7 H97.6" stroke="#9a9a9a" stroke-width="0.8"/><path d="M8 34.7 H92" stroke="#cfd8e8" stroke-width="0.7"/><path d="M2.2 34.7 H4.6 M95 34.7 H97.6" stroke="#9a9a9a" stroke-width="0.8"/><path d="M8 38.7 H92" stroke="#cfd8e8" stroke-width="0.7"/><path d="M2.2 38.7 H4.6 M95 38.7 H97.6" stroke="#9a9a9a" stroke-width="0.8"/><path d="M8 42.6 H92" stroke="#cfd8e8" stroke-width="0.7"/><path d="M2.2 42.6 H4.6 M95 42.6 H97.6" stroke="#9a9a9a" stroke-width="0.8"/><path d="M8 46.6 H92" stroke="#cfd8e8" stroke-width="0.7"/><path d="M2.2 46.6 H4.6 M95 46.6 H97.6" stroke="#9a9a9a" stroke-width="0.8"/><rect x="15.2" y="14.78" width="6.8" height="0.56" fill="#ffc000"/><rect x="15.2" y="34.75" width="6.8" height="11.85" fill="#5b9bd5"/><rect x="15.2" y="23.37" width="6.8" height="11.38" fill="#ed7d31"/><rect x="15.2" y="15.33" width="6.8" height="8.04" fill="#a5a5a5"/><rect x="15.7" y="49.3" width="6" height="1.5" fill="#8c8c8c"/><rect x="36.2" y="37.61" width="6.8" height="8.99" fill="#5b9bd5"/><rect x="36.2" y="28.54" width="6.8" height="9.07" fill="#ed7d31"/><rect x="36.2" y="18.68" width="6.8" height="9.86" fill="#a5a5a5"/><rect x="36.8" y="49.3" width="6" height="1.5" fill="#8c8c8c"/><rect x="57.3" y="35.94" width="6.8" height="10.66" fill="#5b9bd5"/><rect x="57.3" y="25.76" width="6.8" height="10.18" fill="#ed7d31"/><rect x="57.3" y="18.20" width="6.8" height="7.56" fill="#a5a5a5"/><rect x="57.8" y="49.3" width="6" height="1.5" fill="#8c8c8c"/><rect x="78.4" y="18.76" width="6.8" height="2.70" fill="#ffc000"/><rect x="78.4" y="38.80" width="6.8" height="7.80" fill="#5b9bd5"/><rect x="78.4" y="29.58" width="6.8" height="9.23" fill="#ed7d31"/><rect x="78.4" y="21.46" width="6.8" height="8.11" fill="#a5a5a5"/><rect x="78.9" y="49.3" width="6" height="1.5" fill="#8c8c8c"/><rect x="43.5" y="3.6" width="13" height="2.6" fill="#4a5a78" opacity="0.8"/><rect x="27.0" y="54.4" width="1.6" height="1.6" fill="#ffc000"/><rect x="29.4" y="54.5" width="6.6" height="1.4" fill="#9a9a9a"/><rect x="39.2" y="54.4" width="1.6" height="1.6" fill="#5b9bd5"/><rect x="41.6" y="54.5" width="6.6" height="1.4" fill="#9a9a9a"/><rect x="51.4" y="54.4" width="1.6" height="1.6" fill="#ed7d31"/><rect x="53.8" y="54.5" width="6.6" height="1.4" fill="#9a9a9a"/><rect x="63.599999999999994" y="54.4" width="1.6" height="1.6" fill="#a5a5a5"/><rect x="66.0" y="54.5" width="6.6" height="1.4" fill="#9a9a9a"/></svg>
<svg class="b" style="left:826px;top:104px;" width="46" height="42" viewBox="0 0 46 42"><rect x="6.8" y="9.3" width="11.8" height="9.2" fill="#83beec"/><rect x="18.6" y="9.3" width="10.9" height="9.2" fill="#83beec"/><rect x="29.5" y="9.3" width="11.6" height="9.2" fill="#83beec"/><rect x="6.8" y="18.5" width="11.8" height="8.7" fill="#83beec"/><rect x="18.6" y="18.5" width="10.9" height="8.7" fill="#fafafa"/><rect x="29.5" y="18.5" width="11.6" height="8.7" fill="#fafafa"/><rect x="6.8" y="27.2" width="11.8" height="9.2" fill="#83beec"/><rect x="18.6" y="27.2" width="10.9" height="9.2" fill="#fafafa"/><rect x="29.5" y="27.2" width="11.6" height="9.2" fill="#fafafa"/><path d="M6.8 8.700000000000001 V19.1" stroke="#555" stroke-width="1.2"/><path d="M6.8 17.9 V27.8" stroke="#555" stroke-width="1.2"/><path d="M6.8 26.599999999999998 V37.0" stroke="#555" stroke-width="1.2"/><path d="M18.6 8.700000000000001 V19.1" stroke="#1e6fb9" stroke-width="1.2"/><path d="M18.6 17.9 V27.8" stroke="#1e6fb9" stroke-width="1.2"/><path d="M18.6 26.599999999999998 V37.0" stroke="#1e6fb9" stroke-width="1.2"/><path d="M29.5 8.700000000000001 V19.1" stroke="#1e6fb9" stroke-width="1.2"/><path d="M29.5 17.9 V27.8" stroke="#555" stroke-width="1.2"/><path d="M29.5 26.599999999999998 V37.0" stroke="#555" stroke-width="1.2"/><path d="M41.1 8.700000000000001 V19.1" stroke="#555" stroke-width="1.2"/><path d="M41.1 17.9 V27.8" stroke="#555" stroke-width="1.2"/><path d="M41.1 26.599999999999998 V37.0" stroke="#555" stroke-width="1.2"/><path d="M6.2 9.3 H19.200000000000003" stroke="#555" stroke-width="1.2"/><path d="M18.0 9.3 H30.1" stroke="#555" stroke-width="1.2"/><path d="M28.9 9.3 H41.7" stroke="#555" stroke-width="1.2"/><path d="M6.2 18.5 H19.200000000000003" stroke="#1e6fb9" stroke-width="1.2"/><path d="M18.0 18.5 H30.1" stroke="#1e6fb9" stroke-width="1.2"/><path d="M28.9 18.5 H41.7" stroke="#1e6fb9" stroke-width="1.2"/><path d="M6.2 27.2 H19.200000000000003" stroke="#1e6fb9" stroke-width="1.2"/><path d="M18.0 27.2 H30.1" stroke="#555" stroke-width="1.2"/><path d="M28.9 27.2 H41.7" stroke="#555" stroke-width="1.2"/><path d="M6.2 36.4 H19.200000000000003" stroke="#555" stroke-width="1.2"/><path d="M18.0 36.4 H30.1" stroke="#555" stroke-width="1.2"/><path d="M28.9 36.4 H41.7" stroke="#555" stroke-width="1.2"/>
<path d="M5 8 H24.5 L5 26.2 Z" fill="#fff"/>
<path d="M9.4 20.6 V8.5 H21.6" fill="none" stroke="#3a3a3a" stroke-width="1.3"/>
<path d="M17 3.4 L22.1 8.5 L17 13.4" fill="none" stroke="#3a3a3a" stroke-width="1.3"/>
<path d="M4.4 16 L9.4 21 L14.5 16" fill="none" stroke="#3a3a3a" stroke-width="1.3"/>
</svg>
<div class="t " style="left:849.5px;transform:translateX(-50%);top:149.0px;font-size:15px;line-height:20px;color:#242424;">切换行/列</div>
<svg class="b" style="left:898px;top:108px;" width="46" height="42" viewBox="0 0 46 42"><rect x="4.4" y="5.3" width="11.8" height="9.0" fill="#83beec"/><rect x="16.2" y="5.3" width="11.2" height="9.0" fill="#83beec"/><rect x="27.4" y="5.3" width="11.8" height="9.0" fill="#fafafa"/><rect x="4.4" y="14.3" width="11.8" height="8.9" fill="#83beec"/><rect x="16.2" y="14.3" width="11.2" height="8.9" fill="#83beec"/><rect x="27.4" y="14.3" width="11.8" height="8.9" fill="#fafafa"/><rect x="4.4" y="23.2" width="11.8" height="9.2" fill="#fafafa"/><rect x="16.2" y="23.2" width="11.2" height="9.2" fill="#fafafa"/><rect x="27.4" y="23.2" width="11.8" height="9.2" fill="#fafafa"/><path d="M4.4 4.7 V14.9" stroke="#1e6fb9" stroke-width="1.2"/><path d="M4.4 13.700000000000001 V23.8" stroke="#1e6fb9" stroke-width="1.2"/><path d="M4.4 22.599999999999998 V33.0" stroke="#555" stroke-width="1.2"/><path d="M16.2 4.7 V14.9" stroke="#1e6fb9" stroke-width="1.2"/><path d="M16.2 13.700000000000001 V23.8" stroke="#1e6fb9" stroke-width="1.2"/><path d="M16.2 22.599999999999998 V33.0" stroke="#555" stroke-width="1.2"/><path d="M27.4 4.7 V14.9" stroke="#1e6fb9" stroke-width="1.2"/><path d="M27.4 13.700000000000001 V23.8" stroke="#1e6fb9" stroke-width="1.2"/><path d="M27.4 22.599999999999998 V33.0" stroke="#555" stroke-width="1.2"/><path d="M39.2 4.7 V14.9" stroke="#555" stroke-width="1.2"/><path d="M39.2 13.700000000000001 V23.8" stroke="#555" stroke-width="1.2"/><path d="M39.2 22.599999999999998 V33.0" stroke="#555" stroke-width="1.2"/><path d="M3.8000000000000003 5.3 H16.8" stroke="#1e6fb9" stroke-width="1.2"/><path d="M15.6 5.3 H28.0" stroke="#1e6fb9" stroke-width="1.2"/><path d="M26.799999999999997 5.3 H39.800000000000004" stroke="#555" stroke-width="1.2"/><path d="M3.8000000000000003 14.3 H16.8" stroke="#1e6fb9" stroke-width="1.2"/><path d="M15.6 14.3 H28.0" stroke="#1e6fb9" stroke-width="1.2"/><path d="M26.799999999999997 14.3 H39.800000000000004" stroke="#555" stroke-width="1.2"/><path d="M3.8000000000000003 23.2 H16.8" stroke="#1e6fb9" stroke-width="1.2"/><path d="M15.6 23.2 H28.0" stroke="#1e6fb9" stroke-width="1.2"/><path d="M26.799999999999997 23.2 H39.800000000000004" stroke="#555" stroke-width="1.2"/><path d="M3.8000000000000003 32.4 H16.8" stroke="#555" stroke-width="1.2"/><path d="M15.6 32.4 H28.0" stroke="#555" stroke-width="1.2"/><path d="M26.799999999999997 32.4 H39.800000000000004" stroke="#555" stroke-width="1.2"/><rect x="21.2" y="17.799999999999997" width="22.2" height="20.5" fill="#fff" opacity="0"/><rect x="21.0" y="26.5" width="9.8" height="11.8" fill="#fff"/><rect x="27.2" y="17.6" width="10.2" height="20.7" fill="#fff"/><rect x="33.8" y="20.9" width="9.8" height="17.4" fill="#fff"/><rect x="22.8" y="28.3" width="6.2" height="10.0" fill="#c8c6c4" stroke="#555" stroke-width="1.2"/><rect x="35.6" y="22.7" width="6.2" height="15.6" fill="#83beec" stroke="#1e6fb9" stroke-width="1.2"/><rect x="29.0" y="19.4" width="6.6" height="18.9" fill="#fafafa" stroke="#444" stroke-width="1.2"/></svg>
<div class="t " style="left:920px;transform:translateX(-50%);top:149.0px;font-size:15px;line-height:20px;color:#242424;">选择数据</div>
<div class="t " style="left:883px;transform:translateX(-50%);top:200.5px;font-size:15px;line-height:20px;color:#242424;">数据</div>
<svg class="b" style="left:984px;top:106px;" width="40" height="42" viewBox="0 0 40 42">
<rect x="4.9" y="17.4" width="10.7" height="20.6" fill="#c8c6c4" stroke="#555" stroke-width="1.2"/>
<rect x="25.6" y="10" width="10" height="28" fill="#83beec" stroke="#1e6fb9" stroke-width="1.2"/>
<rect x="15.4" y="3.7" width="10.3" height="34.3" fill="#fafafa" stroke="#444" stroke-width="1.3"/>
</svg>
<div class="t " style="left:1005px;transform:translateX(-50%);top:149.0px;font-size:15px;line-height:20px;color:#242424;">更改</div>
<div class="t " style="left:1005px;transform:translateX(-50%);top:168.0px;font-size:15px;line-height:20px;color:#242424;">图表类型</div>
<div class="t " style="left:1005px;transform:translateX(-50%);top:200.5px;font-size:15px;line-height:20px;color:#242424;">类型</div>
<svg class="b" style="left:1068px;top:106px;" width="46" height="42" viewBox="0 0 46 42"><rect x="4.4" y="4.9" width="11.8" height="9.4" fill="#fafafa"/><rect x="16.2" y="4.9" width="11.3" height="9.4" fill="#fafafa"/><rect x="27.5" y="4.9" width="11.8" height="9.4" fill="#fafafa"/><rect x="4.4" y="14.3" width="11.8" height="8.4" fill="#fafafa"/><rect x="16.2" y="14.3" width="11.3" height="8.4" fill="#fafafa"/><rect x="27.5" y="14.3" width="11.8" height="8.4" fill="#fafafa"/><rect x="4.4" y="22.7" width="11.8" height="7.9" fill="#fafafa"/><rect x="16.2" y="22.7" width="11.3" height="7.9" fill="#fafafa"/><rect x="27.5" y="22.7" width="11.8" height="7.9" fill="#fafafa"/><path d="M16.2 4.9 V30.6" stroke="#777" stroke-width="1.2"/><path d="M27.5 4.9 V30.6" stroke="#777" stroke-width="1.2"/><path d="M4.4 14.3 H39.3" stroke="#777" stroke-width="1.2"/><path d="M4.4 22.7 H39.3" stroke="#777" stroke-width="1.2"/><path d="M4.4 30.6 H39.3" stroke="#777" stroke-width="1.2"/><path d="M4.4 4.9 H39.3 V30 M4.4 4.9 V35.3 H14.5 L18.6 30.6" fill="none" stroke="#444" stroke-width="1.3"/><rect x="20.9" y="19.799999999999997" width="22.3" height="20.200000000000003" fill="#fff" opacity="0"/><rect x="20.7" y="28.6" width="9.7" height="11.4" fill="#fff"/><rect x="26.8" y="19.6" width="10.5" height="20.4" fill="#fff"/><rect x="33.7" y="23.5" width="9.7" height="16.5" fill="#fff"/><rect x="22.5" y="30.4" width="6.1" height="9.6" fill="#c8c6c4" stroke="#555" stroke-width="1.2"/><rect x="35.5" y="25.3" width="6.1" height="14.7" fill="#83beec" stroke="#1e6fb9" stroke-width="1.2"/><rect x="28.6" y="21.4" width="6.9" height="18.6" fill="#fafafa" stroke="#444" stroke-width="1.2"/></svg>
<div class="t " style="left:1089.5px;transform:translateX(-50%);top:149.0px;font-size:15px;line-height:20px;color:#242424;">移动图表</div>
<div class="t " style="left:1090.5px;transform:translateX(-50%);top:200.5px;font-size:15px;line-height:20px;color:#242424;">位置</div>
<svg class="b" style="left:1229px;top:205px;" width="16" height="12" viewBox="0 0 16 12"><path d="M2 9.4 L8 3.2 L14 9.4" fill="none" stroke="#333" stroke-width="1.4"/></svg>
<div class="b" style="left:11px;top:234px;width:126.5px;height:32px;background:#fff;border:1px solid #d4d4d4;border-radius:6px"></div>
<div class="t " style="left:19.5px;top:240.5px;font-size:16.5px;line-height:20px;color:#333;">图表 3</div>
<svg class="b" style="left:119px;top:246px;" width="14" height="10" viewBox="0 0 14 10"><path d="M1.4 2 L7 7.6 L12.6 2" fill="none" stroke="#333" stroke-width="1.4"/></svg>
<div class="b" style="left:149px;top:245px;width:2.6px;height:2.6px;background:#555"></div>
<div class="b" style="left:149px;top:249.5px;width:2.6px;height:2.6px;background:#555"></div>
<div class="b" style="left:149px;top:254px;width:2.6px;height:2.6px;background:#555"></div>
<div class="b" style="left:163.5px;top:234px;width:91px;height:32px;background:#fff;border:1px solid #d4d4d4;border-radius:6px"></div>
<svg class="b" style="left:170px;top:242px;" width="17" height="17" viewBox="0 0 17 17"><path d="M1.5 1.5 L15.5 15.5 M15.5 1.5 L1.5 15.5" stroke="#a6a6a6" stroke-width="1.3"/></svg>
<svg class="b" style="left:198px;top:242px;" width="22" height="17" viewBox="0 0 22 17"><path d="M1.5 9.4 L7.6 15.4 L20.5 2.2" fill="none" stroke="#a6a6a6" stroke-width="1.3"/></svg>
<div class="t" style="left:230px;top:238px;font-family:'Liberation Serif',serif;font-style:italic;font-weight:700;font-size:20px;line-height:24px;color:#333;letter-spacing:-0.5px">fx</div>
<div class="b" style="left:260px;top:234px;width:998.5px;height:32px;background:#fff;border:1px solid #d4d4d4;border-radius:6px"></div>
<div class="t " style="left:274.5px;top:240.5px;font-size:16.3px;line-height:20px;color:#2b2b2b;letter-spacing:-0.28px;">=SERIES(Sheet1!$E$1,Sheet1!$A$2:$A$5,Sheet1!$E$2:$E$5,4)</div>
<svg class="b" style="left:1240px;top:245px;" width="15" height="9" viewBox="0 0 15 9"><path d="M1.2 1.4 L7.5 7.6 L13.8 1.4" fill="none" stroke="#333" stroke-width="1.4"/></svg>
<div class="b" style="left:0px;top:275px;width:1243.5px;height:527px;background:#fff"></div>
<div class="b" style="left:0px;top:275px;width:1243.5px;height:21.5px;background:#f2f2f2"></div>
<div class="b" style="left:0px;top:296.5px;width:34.5px;height:505.5px;background:#f1f1f1"></div>
<svg class="b" style="left:16px;top:279px;" width="16" height="15" viewBox="0 0 16 15"><path d="M15 0.5 V14.5 H1 Z" fill="#d9d9d9"/></svg>
<div class="t " style="left:74.5px;transform:translateX(-50%);top:276.5px;font-size:17.5px;line-height:20px;color:#444;">A</div>
<div class="b" style="left:114.0px;top:277px;width:1px;height:19.5px;background:#d8d8d8"></div>
<div class="t " style="left:154.5px;transform:translateX(-50%);top:276.5px;font-size:17.5px;line-height:20px;color:#444;">B</div>
<div class="b" style="left:194.0px;top:277px;width:1px;height:19.5px;background:#d8d8d8"></div>
<div class="t " style="left:234.5px;transform:translateX(-50%);top:276.5px;font-size:17.5px;line-height:20px;color:#444;">C</div>
<div class="b" style="left:274.0px;top:277px;width:1px;height:19.5px;background:#d8d8d8"></div>
<div class="t " style="left:314.5px;transform:translateX(-50%);top:276.5px;font-size:17.5px;line-height:20px;color:#444;">D</div>
<div class="b" style="left:354.0px;top:277px;width:1px;height:19.5px;background:#d8d8d8"></div>
<div class="t " style="left:394.5px;transform:translateX(-50%);top:276.5px;font-size:17.5px;line-height:20px;color:#444;">E</div>
<div class="b" style="left:434.0px;top:277px;width:1px;height:19.5px;background:#d8d8d8"></div>
<div class="t " style="left:474.5px;transform:translateX(-50%);top:276.5px;font-size:17.5px;line-height:20px;color:#444;">F</div>
<div class="b" style="left:514.0px;top:277px;width:1px;height:19.5px;background:#d8d8d8"></div>
<div class="t " style="left:554.5px;transform:translateX(-50%);top:276.5px;font-size:17.5px;line-height:20px;color:#444;">G</div>
<div class="b" style="left:594.0px;top:277px;width:1px;height:19.5px;background:#d8d8d8"></div>
<div class="t " style="left:634.5px;transform:translateX(-50%);top:276.5px;font-size:17.5px;line-height:20px;color:#444;">H</div>
<div class="b" style="left:674.0px;top:277px;width:1px;height:19.5px;background:#d8d8d8"></div>
<div class="t " style="left:714.5px;transform:translateX(-50%);top:276.5px;font-size:17.5px;line-height:20px;color:#444;">I</div>
<div class="b" style="left:754.0px;top:277px;width:1px;height:19.5px;background:#d8d8d8"></div>
<div class="t " style="left:794.5px;transform:translateX(-50%);top:276.5px;font-size:17.5px;line-height:20px;color:#444;">J</div>
<div class="b" style="left:834.0px;top:277px;width:1px;height:19.5px;background:#d8d8d8"></div>
<div class="t " style="left:874.5px;transform:translateX(-50%);top:276.5px;font-size:17.5px;line-height:20px;color:#444;">K</div>
<div class="b" style="left:914.0px;top:277px;width:1px;height:19.5px;background:#d8d8d8"></div>
<div class="t " style="left:954.5px;transform:translateX(-50%);top:276.5px;font-size:17.5px;line-height:20px;color:#444;">L</div>
<div class="b" style="left:994.0px;top:277px;width:1px;height:19.5px;background:#d8d8d8"></div>
<div class="t " style="left:1034.5px;transform:translateX(-50%);top:276.5px;font-size:17.5px;line-height:20px;color:#444;">M</div>
<div class="b" style="left:1074.0px;top:277px;width:1px;height:19.5px;background:#d8d8d8"></div>
<div class="t " style="left:1114.5px;transform:translateX(-50%);top:276.5px;font-size:17.5px;line-height:20px;color:#444;">N</div>
<div class="b" style="left:1154.0px;top:277px;width:1px;height:19.5px;background:#d8d8d8"></div>
<div class="t " style="left:1194.5px;transform:translateX(-50%);top:276.5px;font-size:17.5px;line-height:20px;color:#444;">O</div>
<div class="b" style="left:1234.0px;top:277px;width:1px;height:19.5px;background:#d8d8d8"></div>
<svg class="b" style="left:0px;top:0px;pointer-events:none" width="1270" height="871" viewBox="0 0 1270 871"><path d="M34.5 296.5 V802" stroke="#dfdfdf" stroke-width="1"/><path d="M114.5 296.5 V802" stroke="#dfdfdf" stroke-width="1"/><path d="M194.5 296.5 V802" stroke="#dfdfdf" stroke-width="1"/><path d="M274.5 296.5 V802" stroke="#dfdfdf" stroke-width="1"/><path d="M354.5 296.5 V802" stroke="#dfdfdf" stroke-width="1"/><path d="M434.5 296.5 V802" stroke="#dfdfdf" stroke-width="1"/><path d="M514.5 296.5 V802" stroke="#dfdfdf" stroke-width="1"/><path d="M594.5 296.5 V802" stroke="#dfdfdf" stroke-width="1"/><path d="M674.5 296.5 V802" stroke="#dfdfdf" stroke-width="1"/><path d="M754.5 296.5 V802" stroke="#dfdfdf" stroke-width="1"/><path d="M834.5 296.5 V802" stroke="#dfdfdf" stroke-width="1"/><path d="M914.5 296.5 V802" stroke="#dfdfdf" stroke-width="1"/><path d="M994.5 296.5 V802" stroke="#dfdfdf" stroke-width="1"/><path d="M1074.5 296.5 V802" stroke="#dfdfdf" stroke-width="1"/><path d="M1154.5 296.5 V802" stroke="#dfdfdf" stroke-width="1"/><path d="M1234.5 296.5 V802" stroke="#dfdfdf" stroke-width="1"/><path d="M34.5 296.5 H1243.5" stroke="#dfdfdf" stroke-width="1"/><path d="M0 296.5 H34.5" stroke="#d4d4d4" stroke-width="1"/><path d="M34.5 319.5 H1243.5" stroke="#dfdfdf" stroke-width="1"/><path d="M0 319.5 H34.5" stroke="#d4d4d4" stroke-width="1"/><path d="M34.5 342.5 H1243.5" stroke="#dfdfdf" stroke-width="1"/><path d="M0 342.5 H34.5" stroke="#d4d4d4" stroke-width="1"/><path d="M34.5 365.5 H1243.5" stroke="#dfdfdf" stroke-width="1"/><path d="M0 365.5 H34.5" stroke="#d4d4d4" stroke-width="1"/><path d="M34.5 388.5 H1243.5" stroke="#dfdfdf" stroke-width="1"/><path d="M0 388.5 H34.5" stroke="#d4d4d4" stroke-width="1"/><path d="M34.5 411.5 H1243.5" stroke="#dfdfdf" stroke-width="1"/><path d="M0 411.5 H34.5" stroke="#d4d4d4" stroke-width="1"/><path d="M34.5 434.5 H1243.5" stroke="#dfdfdf" stroke-width="1"/><path d="M0 434.5 H34.5" stroke="#d4d4d4" stroke-width="1"/><path d="M34.5 457.5 H1243.5" stroke="#dfdfdf" stroke-width="1"/><path d="M0 457.5 H34.5" stroke="#d4d4d4" stroke-width="1"/><path d="M34.5 480.5 H1243.5" stroke="#dfdfdf" stroke-width="1"/><path d="M0 480.5 H34.5" stroke="#d4d4d4" stroke-width="1"/><path d="M34.5 503.5 H1243.5" stroke="#dfdfdf" stroke-width="1"/><path d="M0 503.5 H34.5" stroke="#d4d4d4" stroke-width="1"/><path d="M34.5 526.5 H1243.5" stroke="#dfdfdf" stroke-width="1"/><path d="M0 526.5 H34.5" stroke="#d4d4d4" stroke-width="1"/><path d="M34.5 549.5 H1243.5" stroke="#dfdfdf" stroke-width="1"/><path d="M0 549.5 H34.5" stroke="#d4d4d4" stroke-width="1"/><path d="M34.5 572.5 H1243.5" stroke="#dfdfdf" stroke-width="1"/><path d="M0 572.5 H34.5" stroke="#d4d4d4" stroke-width="1"/><path d="M34.5 595.5 H1243.5" stroke="#dfdfdf" stroke-width="1"/><path d="M0 595.5 H34.5" stroke="#d4d4d4" stroke-width="1"/><path d="M34.5 618.5 H1243.5" stroke="#dfdfdf" stroke-width="1"/><path d="M0 618.5 H34.5" stroke="#d4d4d4" stroke-width="1"/><path d="M34.5 641.5 H1243.5" stroke="#dfdfdf" stroke-width="1"/><path d="M0 641.5 H34.5" stroke="#d4d4d4" stroke-width="1"/><path d="M34.5 664.5 H1243.5" stroke="#dfdfdf" stroke-width="1"/><path d="M0 664.5 H34.5" stroke="#d4d4d4" stroke-width="1"/><path d="M34.5 687.5 H1243.5" stroke="#dfdfdf" stroke-width="1"/><path d="M0 687.5 H34.5" stroke="#d4d4d4" stroke-width="1"/><path d="M34.5 710.5 H1243.5" stroke="#dfdfdf" stroke-width="1"/><path d="M0 710.5 H34.5" stroke="#d4d4d4" stroke-width="1"/><path d="M34.5 733.5 H1243.5" stroke="#dfdfdf" stroke-width="1"/><path d="M0 733.5 H34.5" stroke="#d4d4d4" stroke-width="1"/><path d="M34.5 756.5 H1243.5" stroke="#dfdfdf" stroke-width="1"/><path d="M0 756.5 H34.5" stroke="#d4d4d4" stroke-width="1"/><path d="M34.5 779.5 H1243.5" stroke="#dfdfdf" stroke-width="1"/><path d="M0 779.5 H34.5" stroke="#d4d4d4" stroke-width="1"/><path d="M34.5 802.5 H1243.5" stroke="#dfdfdf" stroke-width="1"/><path d="M0 802.5 H34.5" stroke="#d4d4d4" stroke-width="1"/><path d="M0 296.5 H1243.5" stroke="#9e9e9e" stroke-width="1.2"/><path d="M34.5 296 V802" stroke="#a8a8a8" stroke-width="1"/><path d="M1243.5 296.5 V802" stroke="#dfdfdf" stroke-width="1"/></svg>
<div class="t " style="left:17.6px;transform:translateX(-50%);top:299.8px;font-size:17.5px;line-height:20px;color:#444;letter-spacing:-0.6px;">1</div>
<div class="t " style="left:17.6px;transform:translateX(-50%);top:322.8px;font-size:17.5px;line-height:20px;color:#444;letter-spacing:-0.6px;">2</div>
<div class="t " style="left:17.6px;transform:translateX(-50%);top:345.8px;font-size:17.5px;line-height:20px;color:#444;letter-spacing:-0.6px;">3</div>
<div class="t " style="left:17.6px;transform:translateX(-50%);top:368.8px;font-size:17.5px;line-height:20px;color:#444;letter-spacing:-0.6px;">4</div>
<div class="t " style="left:17.6px;transform:translateX(-50%);top:391.8px;font-size:17.5px;line-height:20px;color:#444;letter-spacing:-0.6px;">5</div>
<div class="t " style="left:17.6px;transform:translateX(-50%);top:414.8px;font-size:17.5px;line-height:20px;color:#444;letter-spacing:-0.6px;">6</div>
<div class="t " style="left:17.6px;transform:translateX(-50%);top:437.8px;font-size:17.5px;line-height:20px;color:#444;letter-spacing:-0.6px;">7</div>
<div class="t " style="left:17.6px;transform:translateX(-50%);top:460.8px;font-size:17.5px;line-height:20px;color:#444;letter-spacing:-0.6px;">8</div>
<div class="t " style="left:17.6px;transform:translateX(-50%);top:483.8px;font-size:17.5px;line-height:20px;color:#444;letter-spacing:-0.6px;">9</div>
<div class="t " style="left:17.6px;transform:translateX(-50%);top:506.79999999999995px;font-size:17.5px;line-height:20px;color:#444;letter-spacing:-0.6px;">10</div>
<div class="t " style="left:17.6px;transform:translateX(-50%);top:529.8px;font-size:17.5px;line-height:20px;color:#444;letter-spacing:-0.6px;">11</div>
<div class="t " style="left:17.6px;transform:translateX(-50%);top:552.8px;font-size:17.5px;line-height:20px;color:#444;letter-spacing:-0.6px;">12</div>
<div class="t " style="left:17.6px;transform:translateX(-50%);top:575.8px;font-size:17.5px;line-height:20px;color:#444;letter-spacing:-0.6px;">13</div>
<div class="t " style="left:17.6px;transform:translateX(-50%);top:598.8px;font-size:17.5px;line-height:20px;color:#444;letter-spacing:-0.6px;">14</div>
<div class="t " style="left:17.6px;transform:translateX(-50%);top:621.8px;font-size:17.5px;line-height:20px;color:#444;letter-spacing:-0.6px;">15</div>
<div class="t " style="left:17.6px;transform:translateX(-50%);top:644.8px;font-size:17.5px;line-height:20px;color:#444;letter-spacing:-0.6px;">16</div>
<div class="t " style="left:17.6px;transform:translateX(-50%);top:667.8px;font-size:17.5px;line-height:20px;color:#444;letter-spacing:-0.6px;">17</div>
<div class="t " style="left:17.6px;transform:translateX(-50%);top:690.8px;font-size:17.5px;line-height:20px;color:#444;letter-spacing:-0.6px;">18</div>
<div class="t " style="left:17.6px;transform:translateX(-50%);top:713.8px;font-size:17.5px;line-height:20px;color:#444;letter-spacing:-0.6px;">19</div>
<div class="t " style="left:17.6px;transform:translateX(-50%);top:736.8px;font-size:17.5px;line-height:20px;color:#444;letter-spacing:-0.6px;">20</div>
<div class="t " style="left:17.6px;transform:translateX(-50%);top:759.8px;font-size:17.5px;line-height:20px;color:#444;letter-spacing:-0.6px;">21</div>
<div class="t " style="left:17.6px;transform:translateX(-50%);top:782.8px;font-size:17.5px;line-height:20px;color:#444;letter-spacing:-0.6px;">22</div>
<div class="b" style="left:34.5px;top:296.5px;width:400px;height:23px;background:#d9d9d9"></div>
<div class="b" style="left:34.5px;top:319.5px;width:80px;height:92px;background:#efeaf7"></div>
<div class="b" style="left:354.5px;top:319.5px;width:80px;height:92px;background:#e8eef8"></div>
<div class="b" style="left:354.5px;top:296.5px;width:80px;height:23px;background:#dfd0d2"></div>
<div class="t " style="left:74.5px;transform:translateX(-50%);top:298.5px;font-size:18px;line-height:22px;color:#000;font-weight:700;">周期</div>
<div class="t " style="left:154.5px;transform:translateX(-50%);top:298.5px;font-size:18px;line-height:22px;color:#000;font-weight:700;">第一月</div>
<div class="t " style="left:234.5px;transform:translateX(-50%);top:298.5px;font-size:18px;line-height:22px;color:#000;font-weight:700;">第二月</div>
<div class="t " style="left:314.5px;transform:translateX(-50%);top:298.5px;font-size:18px;line-height:22px;color:#000;font-weight:700;">第三月</div>
<div class="t " style="left:394.5px;transform:translateX(-50%);top:298.5px;font-size:17.6px;line-height:22px;color:#000;font-weight:700;">季度目标</div>
<div class="t " style="left:74.5px;transform:translateX(-50%);top:321.5px;font-size:17.6px;line-height:22px;color:#000;">一季度</div>
<div class="t " style="left:154.5px;transform:translateX(-50%);top:321.5px;font-size:17px;line-height:22px;color:#111;letter-spacing:-0.9px;">149</div>
<div class="t " style="left:234.5px;transform:translateX(-50%);top:321.5px;font-size:17px;line-height:22px;color:#111;letter-spacing:-0.9px;">143</div>
<div class="t " style="left:314.5px;transform:translateX(-50%);top:321.5px;font-size:17px;line-height:22px;color:#111;letter-spacing:-0.9px;">101</div>
<div class="t " style="left:394.5px;transform:translateX(-50%);top:321.5px;font-size:17px;line-height:22px;color:#111;letter-spacing:-0.9px;">400</div>
<div class="t " style="left:74.5px;transform:translateX(-50%);top:344.5px;font-size:17.6px;line-height:22px;color:#000;">二季度</div>
<div class="t " style="left:154.5px;transform:translateX(-50%);top:344.5px;font-size:17px;line-height:22px;color:#111;letter-spacing:-0.9px;">113</div>
<div class="t " style="left:234.5px;transform:translateX(-50%);top:344.5px;font-size:17px;line-height:22px;color:#111;letter-spacing:-0.9px;">114</div>
<div class="t " style="left:314.5px;transform:translateX(-50%);top:344.5px;font-size:17px;line-height:22px;color:#111;letter-spacing:-0.9px;">124</div>
<div class="t " style="left:394.5px;transform:translateX(-50%);top:344.5px;font-size:17px;line-height:22px;color:#111;letter-spacing:-0.9px;">250</div>
<div class="t " style="left:74.5px;transform:translateX(-50%);top:367.5px;font-size:17.6px;line-height:22px;color:#000;">三季度</div>
<div class="t " style="left:154.5px;transform:translateX(-50%);top:367.5px;font-size:17px;line-height:22px;color:#111;letter-spacing:-0.9px;">134</div>
<div class="t " style="left:234.5px;transform:translateX(-50%);top:367.5px;font-size:17px;line-height:22px;color:#111;letter-spacing:-0.9px;">128</div>
<div class="t " style="left:314.5px;transform:translateX(-50%);top:367.5px;font-size:17px;line-height:22px;color:#111;letter-spacing:-0.9px;">95</div>
<div class="t " style="left:394.5px;transform:translateX(-50%);top:367.5px;font-size:17px;line-height:22px;color:#111;letter-spacing:-0.9px;">300</div>
<div class="t " style="left:74.5px;transform:translateX(-50%);top:390.5px;font-size:17.6px;line-height:22px;color:#000;">一季度</div>
<div class="t " style="left:154.5px;transform:translateX(-50%);top:390.5px;font-size:17px;line-height:22px;color:#111;letter-spacing:-0.9px;">98</div>
<div class="t " style="left:234.5px;transform:translateX(-50%);top:390.5px;font-size:17px;line-height:22px;color:#111;letter-spacing:-0.9px;">116</div>
<div class="t " style="left:314.5px;transform:translateX(-50%);top:390.5px;font-size:17px;line-height:22px;color:#111;letter-spacing:-0.9px;">102</div>
<div class="t " style="left:394.5px;transform:translateX(-50%);top:390.5px;font-size:17px;line-height:22px;color:#111;letter-spacing:-0.9px;">350</div>
<svg class="b" style="left:0px;top:0px;pointer-events:none" width="1270" height="871" viewBox="0 0 1270 871"><path d="M114.5 297.0 V412.0" stroke="#000" stroke-width="1.2"/><path d="M194.5 297.0 V412.0" stroke="#000" stroke-width="1.2"/><path d="M274.5 297.0 V412.0" stroke="#000" stroke-width="1.2"/><path d="M354.5 297.0 V412.0" stroke="#000" stroke-width="1.2"/><path d="M434.5 297.0 V412.0" stroke="#000" stroke-width="1.2"/><path d="M34.5 319.5 H435.0" stroke="#000" stroke-width="1.2"/><path d="M34.5 342.5 H435.0" stroke="#000" stroke-width="1.2"/><path d="M34.5 365.5 H435.0" stroke="#000" stroke-width="1.2"/><path d="M34.5 388.5 H435.0" stroke="#000" stroke-width="1.2"/><path d="M34.5 411.5 H435.0" stroke="#000" stroke-width="1.2"/><path d="M35.0 319.5 H114.5 V411.5 H35.0" fill="none" stroke="#7d55c7" stroke-width="2"/><rect x="355.0" y="319.5" width="79.5" height="92" fill="none" stroke="#2d68cc" stroke-width="2"/><rect x="112.0" y="317.0" width="5.5" height="5.5" fill="#7d55c7" stroke="#fff" stroke-width="0.8"/><rect x="112.0" y="409.0" width="5.5" height="5.5" fill="#7d55c7" stroke="#fff" stroke-width="0.8"/><rect x="35.0" y="317.0" width="2" height="5.5" fill="#7d55c7"/><rect x="35.0" y="409.0" width="2" height="5.5" fill="#7d55c7"/><rect x="352.0" y="317.0" width="5.5" height="5.5" fill="#2d68cc" stroke="#fff" stroke-width="0.8"/><rect x="432.0" y="317.0" width="5.5" height="5.5" fill="#2d68cc" stroke="#fff" stroke-width="0.8"/><rect x="352.0" y="409.0" width="5.5" height="5.5" fill="#2d68cc" stroke="#fff" stroke-width="0.8"/><rect x="432.0" y="409.0" width="5.5" height="5.5" fill="#2d68cc" stroke="#fff" stroke-width="0.8"/><path d="M355.0 298.0 V317.0 M434.5 298.0 V317.0" fill="none" stroke="#fff" stroke-width="3.4"/><path d="M355.0 298.0 V317.0 M434.5 298.0 V317.0" fill="none" stroke="#c4303c" stroke-width="1.8"/><rect x="353.0" y="297.1" width="4.5" height="2" fill="#c4303c"/><rect x="432.0" y="297.1" width="4.5" height="2" fill="#c4303c"/></svg>
<div class="b" style="left:174.5px;top:427.5px;width:600.0px;height:360.0px;background:#fff"></div>
<svg class="b" style="left:0px;top:0px;pointer-events:none" width="1270" height="871" viewBox="0 0 1270 871"><path d="M220.5 707.5 H726" stroke="#d9d9d9" stroke-width="1"/><path d="M220.5 683.5 H726" stroke="#d9d9d9" stroke-width="1"/><path d="M220.5 659.5 H726" stroke="#d9d9d9" stroke-width="1"/><path d="M220.5 635.5 H726" stroke="#d9d9d9" stroke-width="1"/><path d="M220.5 611.5 H726" stroke="#d9d9d9" stroke-width="1"/><path d="M220.5 587.5 H726" stroke="#d9d9d9" stroke-width="1"/><path d="M220.5 563.5 H726" stroke="#d9d9d9" stroke-width="1"/><path d="M220.5 539.5 H726" stroke="#d9d9d9" stroke-width="1"/><path d="M220.5 514.5 H726" stroke="#d9d9d9" stroke-width="1"/><path d="M220.5 490.5 H726" stroke="#d9d9d9" stroke-width="1"/><rect x="264" y="514.9" width="39.5" height="3.4" fill="#ffc000"/><rect x="264" y="518.2" width="39.5" height="48.6" fill="#a5a5a5"/><rect x="264" y="566.9" width="39.5" height="68.8" fill="#ed7d31"/><rect x="264" y="635.7" width="39.5" height="71.7" fill="#5b9bd5"/><rect x="264.3" y="515.2" width="38.9" height="192.5" fill="none" stroke="#7f7f7f" stroke-width="1.1"/><circle cx="264" cy="515.2" r="3.3" fill="#d6e8f7" stroke="#1f7fd0" stroke-width="1.1"/><circle cx="264" cy="707.7" r="3.3" fill="#d6e8f7" stroke="#1f7fd0" stroke-width="1.1"/><circle cx="303.5" cy="515.2" r="3.3" fill="#d6e8f7" stroke="#1f7fd0" stroke-width="1.1"/><circle cx="303.5" cy="707.7" r="3.3" fill="#d6e8f7" stroke="#1f7fd0" stroke-width="1.1"/><rect x="390" y="538.5" width="39.5" height="59.7" fill="#a5a5a5"/><rect x="390" y="598.1" width="39.5" height="54.9" fill="#ed7d31"/><rect x="390" y="653.0" width="39.5" height="54.4" fill="#5b9bd5"/><rect x="390.3" y="587.4" width="38.9" height="120.3" fill="none" stroke="#7f7f7f" stroke-width="1.1"/><circle cx="390" cy="587.4" r="3.3" fill="#d6e8f7" stroke="#1f7fd0" stroke-width="1.1"/><circle cx="390" cy="707.7" r="3.3" fill="#d6e8f7" stroke="#1f7fd0" stroke-width="1.1"/><circle cx="429.5" cy="587.4" r="3.3" fill="#d6e8f7" stroke="#1f7fd0" stroke-width="1.1"/><circle cx="429.5" cy="707.7" r="3.3" fill="#d6e8f7" stroke="#1f7fd0" stroke-width="1.1"/><rect x="516.5" y="535.6" width="39.5" height="45.7" fill="#a5a5a5"/><rect x="516.5" y="581.3" width="39.5" height="61.6" fill="#ed7d31"/><rect x="516.5" y="642.9" width="39.5" height="64.5" fill="#5b9bd5"/><rect x="516.8" y="563.3" width="38.9" height="144.4" fill="none" stroke="#7f7f7f" stroke-width="1.1"/><circle cx="516.5" cy="563.3" r="3.3" fill="#d6e8f7" stroke="#1f7fd0" stroke-width="1.1"/><circle cx="516.5" cy="707.7" r="3.3" fill="#d6e8f7" stroke="#1f7fd0" stroke-width="1.1"/><circle cx="556.0" cy="563.3" r="3.3" fill="#d6e8f7" stroke="#1f7fd0" stroke-width="1.1"/><circle cx="556.0" cy="707.7" r="3.3" fill="#d6e8f7" stroke="#1f7fd0" stroke-width="1.1"/><rect x="642.5" y="538.9" width="39.5" height="16.4" fill="#ffc000"/><rect x="642.5" y="555.3" width="39.5" height="49.1" fill="#a5a5a5"/><rect x="642.5" y="604.4" width="39.5" height="55.8" fill="#ed7d31"/><rect x="642.5" y="660.2" width="39.5" height="47.2" fill="#5b9bd5"/><rect x="642.8" y="539.2" width="38.9" height="168.5" fill="none" stroke="#7f7f7f" stroke-width="1.1"/><circle cx="642.5" cy="539.2" r="3.3" fill="#d6e8f7" stroke="#1f7fd0" stroke-width="1.1"/><circle cx="642.5" cy="707.7" r="3.3" fill="#d6e8f7" stroke="#1f7fd0" stroke-width="1.1"/><circle cx="682.0" cy="539.2" r="3.3" fill="#d6e8f7" stroke="#1f7fd0" stroke-width="1.1"/><circle cx="682.0" cy="707.7" r="3.3" fill="#d6e8f7" stroke="#1f7fd0" stroke-width="1.1"/><rect x="332" y="758" width="7.6" height="7.6" fill="#ffc000"/><rect x="419" y="758" width="7.6" height="7.6" fill="#5b9bd5"/><rect x="491" y="758" width="7.6" height="7.6" fill="#ed7d31"/><rect x="563" y="758" width="7.6" height="7.6" fill="#a5a5a5"/><rect x="174.5" y="427.5" width="600.0" height="360.0" fill="none" stroke="#6a6a6a" stroke-width="1.2"/><circle cx="174.8" cy="427.8" r="5.9" fill="#fff" stroke="#555" stroke-width="2.5"/><circle cx="174.8" cy="607.8" r="5.9" fill="#fff" stroke="#555" stroke-width="2.5"/><circle cx="174.8" cy="787.8" r="5.9" fill="#fff" stroke="#555" stroke-width="2.5"/><circle cx="474.8" cy="427.8" r="5.9" fill="#fff" stroke="#555" stroke-width="2.5"/><circle cx="474.8" cy="787.8" r="5.9" fill="#fff" stroke="#555" stroke-width="2.5"/><circle cx="774.8" cy="427.8" r="5.9" fill="#fff" stroke="#555" stroke-width="2.5"/><circle cx="774.8" cy="607.8" r="5.9" fill="#fff" stroke="#555" stroke-width="2.5"/><circle cx="774.8" cy="787.8" r="5.9" fill="#fff" stroke="#555" stroke-width="2.5"/></svg>
<div class="t " style="right:1063.5px;top:699.3px;font-size:13.4px;line-height:16px;color:#595959;">0</div>
<div class="t " style="right:1063.5px;top:675.2349999999999px;font-size:13.4px;line-height:16px;color:#595959;">50</div>
<div class="t " style="right:1063.5px;top:651.17px;font-size:13.4px;line-height:16px;color:#595959;">100</div>
<div class="t " style="right:1063.5px;top:627.1049999999999px;font-size:13.4px;line-height:16px;color:#595959;">150</div>
<div class="t " style="right:1063.5px;top:603.04px;font-size:13.4px;line-height:16px;color:#595959;">200</div>
<div class="t " style="right:1063.5px;top:578.9749999999999px;font-size:13.4px;line-height:16px;color:#595959;">250</div>
<div class="t " style="right:1063.5px;top:554.91px;font-size:13.4px;line-height:16px;color:#595959;">300</div>
<div class="t " style="right:1063.5px;top:530.8449999999999px;font-size:13.4px;line-height:16px;color:#595959;">350</div>
<div class="t " style="right:1063.5px;top:506.78px;font-size:13.4px;line-height:16px;color:#595959;">400</div>
<div class="t " style="right:1063.5px;top:482.715px;font-size:13.4px;line-height:16px;color:#595959;">450</div>
<div class="t " style="right:507.5px;top:530.5px;font-size:13.4px;line-height:16px;color:#595959;">350</div>
<div class="t " style="left:473.5px;transform:translateX(-50%);top:441.2px;font-size:22.5px;line-height:28px;color:#595959;">图表标题</div>
<div class="t " style="left:283.75px;transform:translateX(-50%);top:717.5px;font-size:14.8px;line-height:18px;color:#595959;">一季度</div>
<div class="t " style="left:409.75px;transform:translateX(-50%);top:717.5px;font-size:14.8px;line-height:18px;color:#595959;">二季度</div>
<div class="t " style="left:536.25px;transform:translateX(-50%);top:717.5px;font-size:14.8px;line-height:18px;color:#595959;">三季度</div>
<div class="t " style="left:662.25px;transform:translateX(-50%);top:717.5px;font-size:14.8px;line-height:18px;color:#595959;">一季度</div>
<div class="t " style="left:344.5px;top:751.5px;font-size:14.8px;line-height:18px;color:#595959;">季度目标</div>
<div class="t " style="left:432px;top:751.5px;font-size:14.8px;line-height:18px;color:#595959;">第一月</div>
<div class="t " style="left:503.5px;top:751.5px;font-size:14.8px;line-height:18px;color:#595959;">第二月</div>
<div class="t " style="left:575.5px;top:751.5px;font-size:14.8px;line-height:18px;color:#595959;">第三月</div>
<div class="b" style="left:736px;top:378px;width:37px;height:37px;background:#fff;border:1px solid #4a4a4a"></div>
<svg class="b" style="left:741px;top:383px;" width="28" height="28" viewBox="0 0 28 28">
<path d="M14 2.8 A10.5 10.5 0 0 0 9.56 22.82" fill="none" stroke="#444" stroke-width="1.3"/>
<path d="M14.6 2.6 A10.8 10.8 0 0 1 24.4 9.2 L21 13.3 H14.6 Z" fill="#83beec" stroke="#1e6fb9" stroke-width="1.1"/>
<path d="M26 10.2 L17 19.9" stroke="#fff" stroke-width="4.2" stroke-linecap="round"/>
<path d="M26 10.2 L17 19.9" stroke="#444" stroke-width="2.3" stroke-linecap="round"/>
<path d="M25.6 10.7 L17.6 19.3" stroke="#fff" stroke-width="0.7"/>
<path d="M15.6 18.6 C17.6 18.4 18.8 19.8 18.2 21.6 C17.4 24.4 13.6 26.2 7.8 24.8 C11 24 12.6 21 15.6 18.6 Z" fill="#83beec" stroke="#1e6fb9" stroke-width="1"/>
</svg>
<div class="b" style="left:788px;top:426px;width:35px;height:35.5px;background:#fff;border:1px solid #4a4a4a"></div>
<svg class="b" style="left:793.5px;top:431.2px;" width="22" height="22" viewBox="0 0 22 22"><path d="M11 0.6 V21.4 M0.8 11 H21.2" stroke="#2e9a4b" stroke-width="1.4"/></svg>
<div class="b" style="left:788px;top:463px;width:35px;height:35.5px;background:#fff;border:1px solid #4a4a4a"></div>
<div class="b" style="left:788px;top:500.5px;width:35px;height:35.5px;background:#fff;border:1px solid #4a4a4a;border-top:none;height:53px"></div>
<svg class="b" style="left:791.6px;top:525.4px;" width="26" height="26" viewBox="0 0 26 26"><path d="M2.4 2.6 H23.6 V4.4 L15 13.6 V23.6 H11 V13.6 L2.4 4.4 Z" fill="#fff" stroke="#444" stroke-width="1.3" stroke-linejoin="round"/></svg>
<div class="b" style="left:0px;top:802px;width:1270px;height:41px;background:#efefef;border-top:1px solid #d9d9d9"></div>
<svg class="b" style="left:30px;top:813px;" width="12" height="18" viewBox="0 0 12 18"><path d="M9.6 2 L2.6 9 L9.6 16" fill="none" stroke="#9a9a9a" stroke-width="1.5"/></svg>
<svg class="b" style="left:71px;top:813px;" width="12" height="18" viewBox="0 0 12 18"><path d="M2.4 2 L9.4 9 L2.4 16" fill="none" stroke="#9a9a9a" stroke-width="1.5"/></svg>
<div class="b" style="left:141.5px;top:802px;width:81.5px;height:36px;background:#fff;border-radius:0 0 7px 7px;box-shadow:0 1px 2px rgba(0,0,0,.10)"></div>
<div class="t " style="left:181.5px;transform:translateX(-50%);top:808.5px;font-size:18.4px;line-height:22px;color:#1f1f1f;letter-spacing:-0.3px;">Sheet1</div>
<div class="b" style="left:152px;top:832.7px;width:59.5px;height:2.3px;background:#107c41;border-radius:1px"></div>
<div class="b" style="left:227px;top:811.5px;width:1px;height:22.5px;background:#c8c8c8"></div>
<svg class="b" style="left:279px;top:814px;" width="16" height="16" viewBox="0 0 16 16"><path d="M8 1 V15 M1 8 H15" stroke="#2b2b2b" stroke-width="1.5"/></svg>
<div class="b" style="left:672px;top:812px;width:574px;height:21px;background:#f5f5f5;border-radius:0 11px 11px 0"></div>
<div class="b" style="left:690px;top:817px;width:509px;height:11px;background:#707070;border-radius:6px"></div>
<svg class="b" style="left:1230px;top:816px;" width="11" height="13" viewBox="0 0 11 13"><path d="M1.4 1.6 Q1.4 0.6 2.4 1 L9.6 5.8 Q10.4 6.5 9.6 7.2 L2.4 12 Q1.4 12.4 1.4 11.4 Z" fill="#777"/></svg>
<div class="b" style="left:0px;top:843px;width:1270px;height:26.5px;background:#f4f4f4"></div>
<div class="t " style="left:14.5px;top:848.7px;font-size:15.4px;line-height:18px;color:#333;">就绪</div>
<svg class="b" style="left:69px;top:848px;" width="20" height="19" viewBox="0 0 20 19">
<circle cx="8.95" cy="3.3" r="1.85" fill="none" stroke="#333" stroke-width="1.15"/>
<path d="M1.4 5.5 Q2.2 4.5 3.5 5.2 L7 6.65 H11.2 L14.7 5.2 Q16 4.5 16.5 5.7 Q16.8 6.8 15.6 7.3 L12.1 8.7 V10.2 M9.3 10.9 L6.3 16.9 Q5 18.2 3.8 17.2 Q3 16.1 4 14.5 L5.95 10.6 V8.7 L2.2 7.3 Q0.9 6.6 1.4 5.5 Z" fill="none" stroke="#333" stroke-width="1.15" stroke-linejoin="round"/>
<path d="M11 10.8 L17.8 17.4 M17.8 10.8 L11 17.4" stroke="#333" stroke-width="1.25"/>
</svg>
<div class="t " style="left:92px;top:848.7px;font-size:15px;line-height:18px;color:#2b2b2b;font-weight:700;">辅助功能: 调查</div>
<div class="t " style="left:535.5px;top:849.0px;font-size:15.4px;line-height:18px;color:#333;">平均值: 169.8125</div>
<div class="t " style="left:702.5px;top:849.0px;font-size:15.4px;line-height:18px;color:#333;">计数: 25</div>
<div class="t " style="left:778px;top:849.0px;font-size:15.4px;line-height:18px;color:#333;">求和: 2717</div>
<div class="b" style="left:875px;top:843px;width:50px;height:26.5px;background:#dadada"></div>
<svg class="b" style="left:891px;top:847px;" width="17" height="17" viewBox="0 0 17 17"><rect x="1" y="1" width="15" height="15" fill="none" stroke="#3a3a3a" stroke-width="1.3"/><path d="M6 1 V16 M11 1 V16 M1 6 H16 M1 11 H16" stroke="#3a3a3a" stroke-width="1.2"/></svg>
<svg class="b" style="left:941px;top:847px;" width="18" height="17" viewBox="0 0 18 17"><rect x="1" y="1" width="16" height="15" rx="1" fill="none" stroke="#3a3a3a" stroke-width="1.3"/><rect x="5" y="4.6" width="8" height="8" fill="none" stroke="#3a3a3a" stroke-width="1.1"/><path d="M7 7.4 H11 M7 9.8 H11" stroke="#3a3a3a" stroke-width="1"/></svg>
<svg class="b" style="left:991px;top:847px;" width="18" height="17" viewBox="0 0 18 17"><rect x="1" y="1" width="16" height="15" rx="1" fill="none" stroke="#3a3a3a" stroke-width="1.3"/><path d="M5.6 1 V8.4 M11.6 1 V8.4 M1 8.4 H17" stroke="#3a3a3a" stroke-width="1.2"/></svg>
<div class="b" style="left:1032px;top:856.4px;width:9px;height:1.3px;background:#333"></div>
<div class="b" style="left:1048px;top:856.5px;width:140px;height:1.2px;background:#6a6a6a"></div>
<div class="b" style="left:1108px;top:850px;width:6px;height:14px;background:#6a6a6a;border-radius:1px"></div>
<svg class="b" style="left:1178px;top:851px;" width="11" height="11" viewBox="0 0 11 11"><path d="M5.5 0.5 V10.5 M0.5 5.5 H10.5" stroke="#333" stroke-width="1.2"/></svg>
<div class="t " style="left:1206px;top:849.0px;font-size:15.4px;line-height:18px;color:#333;letter-spacing:-0.4px;">100%</div>
<div class="b" style="left:1244px;top:275px;width:24.5px;height:527px;background:#f1f1f1"></div>
<div class="b" style="left:1246px;top:276px;width:21.5px;height:530px;background:#f6f6f6;border-radius:10.5px"></div>
<svg class="b" style="left:1250px;top:279px;" width="14" height="11" viewBox="0 0 14 11"><path d="M6.8 1.2 Q7 1 7.2 1.2 L12.6 8 Q13 9.4 11.6 9.6 H2.4 Q1 9.4 1.4 8 Z" fill="#707070"/></svg>
<div class="b" style="left:1251.3px;top:295px;width:10.8px;height:487.6px;background:#707070;border-radius:6px"></div>
<svg class="b" style="left:1250px;top:790px;" width="14" height="11" viewBox="0 0 14 11"><path d="M6.8 9.8 Q7 10 7.2 9.8 L12.6 3 Q13 1.6 11.6 1.4 H2.4 Q1 1.6 1.4 3 Z" fill="#707070"/></svg>
<div class="b" style="left:662px;top:443px;width:255px;height:84px;background:#fff;border:1px solid #cfcfcf;box-shadow:0 1px 5px rgba(0,0,0,.14)"></div>
<svg class="b" style="left:676px;top:449px;" width="34" height="26" viewBox="0 0 34 26">
<path d="M14.4 6.4 L6.6 14.2 L14.6 22 L24.6 12.6 L19.2 7.2" fill="#fff" stroke="#444" stroke-width="1.3" stroke-linejoin="round"/>
<path d="M14.4 10.2 V3.8 C14.4 1 19.2 1 19.2 3.8 V10.6" fill="none" stroke="#444" stroke-width="1.3"/>
<path d="M21.6 8.6 C25.4 7.2 27.6 11 27.2 20.4 C26 15.4 25.4 13.4 22.6 11.2 Z" fill="#5aa7e6" stroke="#1a6fbe" stroke-width="1"/>
</svg>
<div class="b" style="left:678px;top:473.3px;width:30px;height:7.6px;background:#ed7d31;border-top:1px solid #9a7a66"></div>
<svg class="b" style="left:709px;top:462px;" width="9" height="8" viewBox="0 0 9 8"><path d="M1.2 2.4 L4.5 5.7 L7.8 2.4" fill="none" stroke="#333" stroke-width="1.3"/></svg>
<div class="t " style="left:692.3px;transform:translateX(-50%);top:491.5px;font-size:14.8px;line-height:18px;color:#2b2b2b;">填充</div>
<svg class="b" style="left:727px;top:449px;" width="34" height="26" viewBox="0 0 34 26">
<path d="M22.6 4.8 H3.5 V22.2 H10.4" fill="none" stroke="#555" stroke-width="1.4"/>
<path d="M12.2 22.8 L14 17.4 L26.2 5.2 C27.6 3.8 29.8 3.8 30.8 5 C31.8 6.2 31.6 8 30.4 9.2 L18 21.2 Z" fill="#fff" stroke="#1e8fd8" stroke-width="1.3" stroke-linejoin="round"/>
<path d="M14 17.4 L18 21.2 M12.2 22.8 L15.6 21.8 L13.4 19.4 Z" fill="#5aa7e6" stroke="#1e8fd8" stroke-width="1"/>
<path d="M24.4 7 L28.6 11" stroke="#1e8fd8" stroke-width="1.1"/>
</svg>
<div class="b" style="left:729px;top:473.3px;width:30px;height:7.6px;background:#5b9bd5;border-top:1px solid #7f8a96"></div>
<svg class="b" style="left:760px;top:462px;" width="9" height="8" viewBox="0 0 9 8"><path d="M1.2 2.4 L4.5 5.7 L7.8 2.4" fill="none" stroke="#333" stroke-width="1.3"/></svg>
<div class="t " style="left:743px;transform:translateX(-50%);top:491.5px;font-size:14.8px;line-height:18px;color:#2b2b2b;">边框</div>
<div class="b" style="left:771px;top:470.2px;width:140.5px;height:29.4px;background:#fff;border:1px solid #8a8a8a;border-radius:6px"></div>
<div class="t " style="left:774px;top:477.3px;font-size:15.4px;line-height:18px;color:#1f1f1f;">系列 "季度目标"</div>
<svg class="b" style="left:891.5px;top:482px;" width="9" height="8" viewBox="0 0 9 8"><path d="M1.2 2.4 L4.5 5.7 L7.8 2.4" fill="none" stroke="#333" stroke-width="1.3"/></svg>
<div class="b" style="left:662px;top:546px;width:229px;height:297px;background:#fff;border:1px solid #5a5a5a;box-shadow:1px 1px 4px rgba(0,0,0,.16)"></div>
<div class="b" style="left:663px;top:805px;width:227px;height:37px;background:#f3f3f3"></div>
<div class="t " style="left:709px;top:556.0px;font-size:15.2px;line-height:20px;color:#262626;">删除(<u>D</u>)</div>
<div class="t " style="left:709px;top:591.3px;font-size:15.2px;line-height:20px;color:#262626;">重设以匹配样式(<u>A</u>)</div>
<div class="b" style="left:704px;top:621px;width:185px;height:1px;background:#d0d0d0"></div>
<div class="t " style="left:709px;top:630.5px;font-size:15.2px;line-height:20px;color:#262626;">更改系列图表类型(<u>Y</u>)<span style="letter-spacing:-1.1px">...</span></div>
<div class="t " style="left:709px;top:666.0px;font-size:15.2px;line-height:20px;color:#262626;">选择数据(<u>E</u>)<span style="letter-spacing:-1.1px">...</span></div>
<div class="t " style="left:709px;top:703.0px;font-size:15.2px;line-height:20px;color:#b4b4b4;">三维旋转(<u>R</u>)<span style="letter-spacing:-1.1px">...</span></div>
<div class="b" style="left:704px;top:732.3px;width:185px;height:1px;background:#d0d0d0"></div>
<div class="t " style="left:709px;top:741.3px;font-size:15.2px;line-height:20px;color:#262626;">添加数据标签(<u>B</u>)</div>
<div class="b" style="left:860px;top:744px;width:1px;height:16px;background:#d4d4d4"></div>
<svg class="b" style="left:870px;top:744px;" width="10" height="14" viewBox="0 0 10 14"><path d="M2 1.6 L7.6 7 L2 12.4" fill="none" stroke="#333" stroke-width="1.4"/></svg>
<div class="t " style="left:709px;top:777.6px;font-size:15.2px;line-height:20px;color:#262626;">添加趋势线(<u>R</u>)<span style="letter-spacing:-1.1px">...</span></div>
<div class="t " style="left:709px;top:814.0px;font-size:15.2px;line-height:20px;color:#262626;">设置数据系列格式(<u>F</u>)<span style="letter-spacing:-1.1px">...</span></div>
<svg class="b" style="left:676px;top:588px;" width="22" height="23" viewBox="0 0 22 23">
<path d="M10 3 H19 V21 H5 V11" fill="none" stroke="#555" stroke-width="1.3"/>
<path d="M2.4 6.4 C7 5.4 11.6 7.6 11.4 12.4" fill="none" stroke="#1e8fd8" stroke-width="1.5"/>
<path d="M6.2 2.4 L2.2 6.4 L6.4 10" fill="none" stroke="#1e8fd8" stroke-width="1.5"/>
<path d="M13.4 9.4 H15.6 M8.4 15.6 H11 M13.4 15.6 H15.6 M8.4 12.6 V15.6" stroke="#8a8a8a" stroke-width="1.3"/>
</svg>
<svg class="b" style="left:676px;top:627px;" width="24" height="23" viewBox="0 0 24 23">
<rect x="2.6" y="11.4" width="6" height="9.6" fill="#c8c6c4" stroke="#666" stroke-width="1.1"/>
<rect x="15.4" y="6.2" width="6.2" height="14.8" fill="#83beec" stroke="#1e6fb9" stroke-width="1.2"/>
<rect x="8.6" y="2.8" width="6.8" height="18.2" fill="#fafafa" stroke="#444" stroke-width="1.2"/>
</svg>
<svg class="b" style="left:676px;top:664px;" width="24" height="22" viewBox="0 0 24 22">
<rect x="2.6" y="2.5" width="19" height="17" fill="#fafafa" stroke="#555" stroke-width="1.2"/>
<path d="M2.6 14 H21.6 M15.4 2.5 V19.5" stroke="#555" stroke-width="1.2"/>
<rect x="2.6" y="2.5" width="12.8" height="11.5" fill="#83beec" stroke="#1e6fb9" stroke-width="1.2"/>
<path d="M9 2.5 V14 M2.6 8.2 H15.4" stroke="#1e6fb9" stroke-width="1.2"/>
<rect x="11.6" y="7.4" width="11.4" height="14" fill="#fff"/>
<rect x="13.2" y="14.4" width="4.2" height="5.8" fill="#83beec" stroke="#1e6fb9" stroke-width="1.2"/>
<rect x="17.4" y="9" width="4.2" height="11.2" fill="#fafafa" stroke="#444" stroke-width="1.2"/>
</svg>
<svg class="b" style="left:676px;top:700px;" width="22" height="22" viewBox="0 0 22 22">
<path d="M3.4 3.6 L6 2.2 H19 L17 3.6 Z" fill="#e0e0e0" stroke="#b0b0b0" stroke-width="1"/>
<path d="M17 3.6 L19 2.2 V18.4 L17 19.8 Z" fill="#c8c8c8" stroke="#b0b0b0" stroke-width="1"/>
<rect x="3.4" y="3.6" width="13.6" height="16.2" rx="1" fill="#f2f2f2" stroke="#b0b0b0" stroke-width="1.3"/>
</svg>
<svg class="b" style="left:676px;top:810px;" width="24" height="24" viewBox="0 0 24 24">
<path d="M8.4 3.8 L2.8 9.6 L8.8 15.6 L14.8 9.6" fill="#f3f3f3" stroke="#333" stroke-width="1.3" stroke-linejoin="round"/>
<path d="M8.4 6.4 V3 C8.4 1.2 11.8 1.2 11.8 3 V6.6" fill="none" stroke="#333" stroke-width="1.2"/>
<path d="M13.6 6.2 C15.6 5.6 16.8 7.2 16.6 10" fill="none" stroke="#5aa7e6" stroke-width="1.4"/>
<path d="M20.4 9 C21.4 8.2 22.6 9.2 21.8 10.4 L14.4 18 L12.6 16.4 Z" fill="#f3f3f3" stroke="#333" stroke-width="1.2" stroke-linejoin="round"/>
<path d="M12.4 16.6 L14.2 18.2 C13.6 20.6 10.4 22 6.2 21.2 C9 20 10.8 18.8 12.4 16.6 Z" fill="#2f8be0"/>
</svg>
<div class="b" style="left:651px;top:796px;width:251px;height:57.5px;border:3px solid #e81e25"></div>
<div class="t " style="left:924.5px;transform:translateX(-50%);top:206.5px;font-size:21.5px;line-height:26px;color:#e81e25;font-weight:900;text-shadow:-1.2px 0 #fff,1.2px 0 #fff,0 -1.2px #fff,0 1.2px #fff,-1px -1px #fff,1px 1px #fff,-1px 1px #fff,1px -1px #fff;">我</div>
<div class="t " style="left:960.6px;transform:translateX(-50%);top:206.5px;font-size:21.5px;line-height:26px;color:#e81e25;font-weight:900;text-shadow:-1.2px 0 #fff,1.2px 0 #fff,0 -1.2px #fff,0 1.2px #fff,-1px -1px #fff,1px 1px #fff,-1px 1px #fff,1px -1px #fff;">爱</div>
<div class="t " style="left:996.7px;transform:translateX(-50%);top:206.5px;font-size:21.5px;line-height:26px;color:#e81e25;font-weight:900;text-shadow:-1.2px 0 #fff,1.2px 0 #fff,0 -1.2px #fff,0 1.2px #fff,-1px -1px #fff,1px 1px #fff,-1px 1px #fff,1px -1px #fff;">分</div>
<div class="t " style="left:1032.8px;transform:translateX(-50%);top:206.5px;font-size:21.5px;line-height:26px;color:#e81e25;font-weight:900;text-shadow:-1.2px 0 #fff,1.2px 0 #fff,0 -1.2px #fff,0 1.2px #fff,-1px -1px #fff,1px 1px #fff,-1px 1px #fff,1px -1px #fff;">享</div>
<div class="t " style="left:1068.9px;transform:translateX(-50%);top:206.5px;font-size:21.5px;line-height:26px;color:#e81e25;font-weight:900;text-shadow:-1.2px 0 #fff,1.2px 0 #fff,0 -1.2px #fff,0 1.2px #fff,-1px -1px #fff,1px 1px #fff,-1px 1px #fff,1px -1px #fff;">网</div>
<div class="t" style="left:914.5px;top:238px;font-family:'Liberation Serif',serif;font-weight:700;font-size:17.6px;line-height:20px;color:#e81e25;letter-spacing:0.18px">www.zhanshaoyi.com</div>
<div class="t" style="left:1152px;top:844px;font-family:'Liberation Serif',serif;font-size:15px;line-height:20px;color:#e0262c;letter-spacing:0.05px">zhanshaoyi.com</div>
<div class="b" style="left:0px;top:0px;width:1270px;height:871px;border:solid #107c41;border-width:1px 1.5px 2px 1px;pointer-events:none"></div>
<div class="b" style="left:1px;top:1px;width:1px;height:868px;background:rgba(255,255,255,.7)"></div>
</body></html>
